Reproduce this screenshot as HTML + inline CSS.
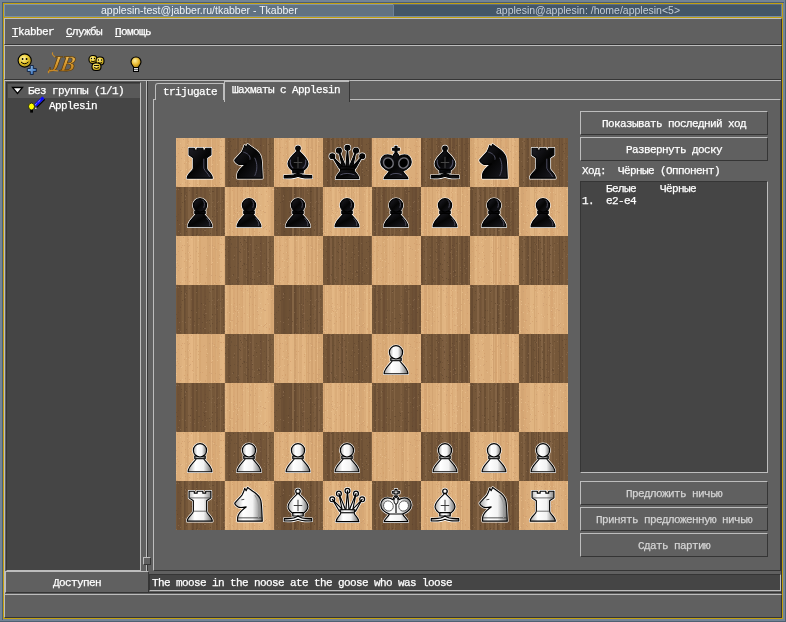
<!DOCTYPE html><html><head><meta charset="utf-8"><style>
html,body{margin:0;padding:0;width:786px;height:622px;overflow:hidden;background:#738496}
body{position:relative;font-family:"Liberation Mono",monospace}
.m{will-change:transform;-webkit-text-stroke:0.25px currentColor;position:absolute;white-space:pre;font-family:"Liberation Mono",monospace;font-size:11px;letter-spacing:-0.6px;line-height:12px;color:#fff}
.mn{position:absolute;white-space:pre;font-family:"Liberation Sans",sans-serif;font-size:11px;letter-spacing:0px;line-height:12px;color:#fff}
.tt{will-change:transform;position:absolute;white-space:pre;font-family:"Liberation Sans",sans-serif;font-size:10.5px;letter-spacing:0px;line-height:12px}
u{text-decoration:underline}
</style></head><body><div style="position:absolute;left:0px;top:0px;width:786px;height:622px;background:#738496"></div>
<div style="position:absolute;left:785px;top:0px;width:1px;height:622px;background:#4f6172"></div>
<div style="position:absolute;left:0px;top:621px;width:786px;height:1px;background:#4f6172"></div>
<div style="position:absolute;left:2px;top:2px;width:782px;height:1px;background:#4d5f70"></div>
<div style="position:absolute;left:2px;top:2px;width:1px;height:618px;background:#4d5f70"></div>
<div style="position:absolute;left:3px;top:3px;width:778px;height:614px;border:1px solid #c2a010"></div>
<div style="position:absolute;left:4px;top:4px;width:389px;height:13px;background:#617282;border-top:1px solid #7f94a8;border-left:1px solid #7f94a8;box-sizing:border-box"></div>
<div style="position:absolute;left:393px;top:4px;width:389px;height:13px;background:#445667;border-top:1px solid #5d7084;border-left:1px solid #6e8296;border-right:1px solid #6e8296;box-sizing:border-box"></div>
<div style="position:absolute;left:4px;top:16px;width:777px;height:1px;background:#7a8ea2"></div>
<div style="position:absolute;left:3px;top:17px;width:780px;height:1px;background:#c2a010"></div>
<div class="tt" style="left:101px;top:4px;color:#eef2f6">applesin-test@jabber.ru/tkabber - Tkabber</div>
<div class="tt" style="left:496px;top:4px;color:#c3ccd6">applesin@applesin: /home/applesin&lt;5&gt;</div>
<div style="position:absolute;left:4px;top:18px;width:778px;height:600px;background:#606060"></div>
<div style="position:absolute;left:4px;top:18px;width:776px;height:25px;background:#606060;border-top:1px solid #bdbdbd;border-left:1px solid #bdbdbd;border-bottom:1px solid #353535;border-right:1px solid #353535;"></div>
<div class="m" style="left:12px;top:26px;"><u>T</u>kabber</div>
<div class="m" style="left:66px;top:26px;"><u>С</u>лужбы</div>
<div class="m" style="left:115px;top:26px;"><u>П</u>омощь</div>
<div style="position:absolute;left:4px;top:45px;width:776px;height:33px;background:#606060;border-top:1px solid #bdbdbd;border-left:1px solid #bdbdbd;border-bottom:1px solid #353535;border-right:1px solid #353535;"></div>
<div style="position:absolute;left:4px;top:80px;width:778px;height:1px;background:#bdbdbd"></div>
<div style="position:absolute;left:4px;top:80px;width:1px;height:514px;background:#bdbdbd"></div>
<div style="position:absolute;left:781px;top:80px;width:1px;height:514px;background:#353535"></div>
<div style="position:absolute;left:6px;top:82px;width:133px;height:487px;background:#454545;border-top:1px solid #353535;border-left:1px solid #353535;border-bottom:1px solid #bdbdbd;border-right:1px solid #bdbdbd;"></div>
<div style="position:absolute;left:8px;top:84px;width:132px;height:14px;background:#595959"></div>
<svg style="position:absolute;left:11px;top:86px" width="13" height="9"><path d="M1.5,1.5 H11.5 L6.5,7.5 Z" fill="#fff" stroke="#000" stroke-width="1.3"/></svg>
<div class="m" style="left:28px;top:85px;">Без группы (1/1)</div>
<div class="m" style="left:49px;top:100px;">Applesin</div>
<svg style="position:absolute;left:27px;top:95px" width="19" height="19">
<path d="M9.8,12.3 L17.8,4.3" stroke="#000" stroke-width="1.2"/>
<path d="M7,9.5 L15.3,1.5 L17.6,3.6 L9.4,11.6 Z" fill="#0a0aff"/>
<path d="M8,10.2 L14,4.4" stroke="#fff" stroke-width="0.9" stroke-dasharray="1,1"/>
<rect x="8.2" y="12.7" width="1.2" height="1.2" fill="#fff"/>
<ellipse cx="4.5" cy="11.5" rx="3" ry="3.4" fill="#ffff00" stroke="#111" stroke-width="0.8"/>
<rect x="3.2" y="15" width="2.8" height="2.6" fill="#000"/>
</svg>
<div style="position:absolute;left:146px;top:81px;width:1px;height:490px;background:#bdbdbd"></div>
<div style="position:absolute;left:147px;top:81px;width:1px;height:490px;background:#353535"></div>
<div style="position:absolute;left:143px;top:557px;width:6px;height:6px;background:#606060;border-top:1px solid #bdbdbd;border-left:1px solid #bdbdbd;border-bottom:1px solid #353535;border-right:1px solid #353535;"></div>
<div style="position:absolute;left:153px;top:99px;width:626px;height:470px;background:#606060;border-top:1px solid #bdbdbd;border-left:1px solid #bdbdbd;border-bottom:1px solid #353535;border-right:1px solid #353535;"></div>
<div style="position:absolute;left:155px;top:83px;width:67px;height:16px;background:#606060;border-top:1px solid #bdbdbd;border-left:1px solid #bdbdbd;border-right:1px solid #bdbdbd;border-top-left-radius:3px"></div>
<div class="m" style="left:163px;top:86px;">trijugate</div>
<div style="position:absolute;left:224px;top:80px;width:124px;height:20px;background:#606060;border-top:2px solid #bdbdbd;border-left:1px solid #bdbdbd;border-right:1px solid #353535;box-sizing:content-box"></div>
<div class="m" style="left:232px;top:84px;">Шахматы с Applesin</div>
<div style="position:absolute;left:580px;top:111px;width:186px;height:22px;background:#606060;border-top:1px solid #bdbdbd;border-left:1px solid #bdbdbd;border-bottom:1px solid #353535;border-right:1px solid #353535;"></div>
<div class="m" style="left:580px;top:118px;width:188px;text-align:center;color:#ffffff">Показывать последний ход</div>
<div style="position:absolute;left:580px;top:137px;width:186px;height:22px;background:#606060;border-top:1px solid #bdbdbd;border-left:1px solid #bdbdbd;border-bottom:1px solid #353535;border-right:1px solid #353535;"></div>
<div class="m" style="left:580px;top:144px;width:188px;text-align:center;color:#ffffff">Развернуть доску</div>
<div class="m" style="left:582px;top:165px;">Ход:&nbsp;&nbsp;Чёрные (Оппонент)</div>
<div style="position:absolute;left:580px;top:181px;width:186px;height:290px;background:#454545;border-top:1px solid #353535;border-left:1px solid #353535;border-bottom:1px solid #bdbdbd;border-right:1px solid #bdbdbd;"></div>
<div class="m" style="left:582px;top:183px;">&nbsp;&nbsp;&nbsp;&nbsp;Белые&nbsp;&nbsp;&nbsp;&nbsp;Чёрные</div>
<div class="m" style="left:582px;top:195px;">1.&nbsp;&nbsp;e2-e4</div>
<div style="position:absolute;left:580px;top:481px;width:186px;height:22px;background:#606060;border-top:1px solid #bdbdbd;border-left:1px solid #bdbdbd;border-bottom:1px solid #353535;border-right:1px solid #353535;"></div>
<div class="m" style="left:580px;top:488px;width:188px;text-align:center;color:#d4d4d4">Предложить ничью</div>
<div style="position:absolute;left:580px;top:507px;width:186px;height:22px;background:#606060;border-top:1px solid #bdbdbd;border-left:1px solid #bdbdbd;border-bottom:1px solid #353535;border-right:1px solid #353535;"></div>
<div class="m" style="left:580px;top:514px;width:188px;text-align:center;color:#d4d4d4">Принять предложенную ничью</div>
<div style="position:absolute;left:580px;top:533px;width:186px;height:22px;background:#606060;border-top:1px solid #bdbdbd;border-left:1px solid #bdbdbd;border-bottom:1px solid #353535;border-right:1px solid #353535;"></div>
<div class="m" style="left:580px;top:540px;width:188px;text-align:center;color:#d4d4d4">Сдать партию</div>
<div style="position:absolute;left:5px;top:571px;width:142px;height:20px;background:#606060;border-top:1px solid #bdbdbd;border-left:1px solid #bdbdbd;border-bottom:1px solid #353535;border-right:1px solid #353535;"></div>
<div class="m" style="left:5px;top:577px;width:144px;text-align:center">Доступен</div>
<div style="position:absolute;left:149px;top:574px;width:630px;height:15px;background:#454545;border-top:1px solid #353535;border-left:1px solid #353535;border-bottom:1px solid #bdbdbd;border-right:1px solid #bdbdbd;"></div>
<div class="m" style="left:152px;top:577px;">The moose in the noose ate the goose who was loose</div>
<div style="position:absolute;left:149px;top:592px;width:632px;height:1px;background:#353535"></div>
<div style="position:absolute;left:4px;top:594px;width:776px;height:22px;background:#606060;border-top:1px solid #bdbdbd;border-left:1px solid #bdbdbd;border-bottom:1px solid #353535;border-right:1px solid #353535;"></div>
<svg style="position:absolute;left:16px;top:52px" width="24" height="25">
<defs><radialGradient id="sg" cx="0.4" cy="0.35" r="0.7"><stop offset="0" stop-color="#fff3a0"/><stop offset="0.5" stop-color="#e8c830"/><stop offset="1" stop-color="#a88a10"/></radialGradient>
<linearGradient id="bg1" x1="0" y1="0" x2="1" y2="1"><stop offset="0" stop-color="#9cc8f0"/><stop offset="1" stop-color="#2a62b0"/></linearGradient></defs>
<circle cx="8.7" cy="8.5" r="6.6" fill="url(#sg)" stroke="#000" stroke-width="1.1"/>
<circle cx="6.6" cy="7" r="0.9" fill="#000"/><circle cx="10.6" cy="7" r="0.9" fill="#000"/>
<path d="M5,10 Q8.7,13.5 12.4,10" fill="none" stroke="#000" stroke-width="1"/>
<path d="M14.3,13 h3 v3 h3 v3 h-3 v3 h-3 v-3 h-3 v-3 h3 z" fill="url(#bg1)" stroke="#102040" stroke-width="0.9" transform="translate(0,0.5)"/>
</svg>
<svg style="position:absolute;left:46px;top:51px" width="34" height="25">
<defs><linearGradient id="jbg" x1="0" y1="0" x2="0" y2="1"><stop offset="0" stop-color="#f8d070"/><stop offset="0.5" stop-color="#d89a30"/><stop offset="1" stop-color="#a86a10"/></linearGradient></defs>
<text x="6" y="20" font-family="Liberation Serif" font-style="italic" font-weight="bold" font-size="22" fill="url(#jbg)" stroke="#5a3a08" stroke-width="0.7" letter-spacing="0" transform="skewX(-10)">JB</text>
<path d="M3,22 Q1,20 5,19.5 Q9,19 12,20" fill="none" stroke="#c88a28" stroke-width="1.3"/>
<path d="M9,6 Q5,3 7,1.5" fill="none" stroke="#c88a28" stroke-width="1.2"/>
</svg>
<svg style="position:absolute;left:87px;top:54px" width="20" height="18">
<defs><radialGradient id="sg2" cx="0.4" cy="0.35" r="0.7"><stop offset="0" stop-color="#fff3a0"/><stop offset="0.5" stop-color="#e8c830"/><stop offset="1" stop-color="#a88a10"/></radialGradient></defs>
<g stroke="#000" stroke-width="1.1" fill="url(#sg2)">
<rect x="2" y="1.5" width="8" height="8" rx="3.5"/><rect x="9" y="3" width="8" height="8" rx="3.5"/><rect x="5" y="9" width="9" height="7.5" rx="3.5"/></g>
<g fill="#000"><circle cx="4.5" cy="4.5" r="0.7"/><circle cx="7.5" cy="4.5" r="0.7"/><circle cx="11.5" cy="6" r="0.7"/><circle cx="14.5" cy="6" r="0.7"/></g>
<g stroke="#000" stroke-width="0.9" fill="none"><path d="M4,7 Q6,8.5 8,7"/><path d="M11,8.5 Q13,10 15,8.5"/><path d="M7,11.5 h5"/><path d="M7,13.5 Q9.5,15.5 12,13.5"/></g>
</svg>
<svg style="position:absolute;left:129px;top:55px" width="14" height="18">
<defs><radialGradient id="bulb" cx="0.4" cy="0.35" r="0.7"><stop offset="0" stop-color="#fff0a0"/><stop offset="0.55" stop-color="#e8b830"/><stop offset="1" stop-color="#a07810"/></radialGradient></defs>
<path d="M7,2 C3.5,2 2,4.5 2,7 C2,9.5 4,11 5,12.5 H9 C10,11 12,9.5 12,7 C12,4.5 10.5,2 7,2 Z" fill="url(#bulb)" stroke="#000" stroke-width="1.1"/>
<rect x="4.5" y="12.5" width="5" height="4" fill="#d8d8d8" stroke="#000" stroke-width="1"/>
<path d="M5,14.5 h4" stroke="#555" stroke-width="0.8"/>
</svg>
<svg style="position:absolute;left:176px;top:138px" width="392" height="392"><defs><linearGradient id="wg" x1="0" y1="0" x2="1" y2="0"><stop offset="0" stop-color="#a8a8a8"/><stop offset="0.3" stop-color="#ffffff"/><stop offset="0.65" stop-color="#f2f2f2"/><stop offset="1" stop-color="#707070"/></linearGradient><linearGradient id="bgr" x1="0" y1="0" x2="1" y2="1"><stop offset="0" stop-color="#202028"/><stop offset="0.5" stop-color="#050505"/><stop offset="1" stop-color="#1c1c24"/></linearGradient><pattern id="lt" patternUnits="userSpaceOnUse" width="392" height="49"><rect width="392" height="49" fill="#dbad7a"/><rect x="0" y="0" width="1" height="49" fill="#e8bd8a" opacity="0.31"/><rect x="4" y="0" width="2" height="49" fill="#e8bd8a" opacity="0.26"/><rect x="6" y="0" width="2" height="49" fill="#eec490" opacity="0.32"/><rect x="8" y="0" width="1" height="49" fill="#e8bd8a" opacity="0.46"/><rect x="11" y="0" width="1" height="49" fill="#c99866" opacity="0.29"/><rect x="13" y="0" width="2" height="49" fill="#eec490" opacity="0.41"/><rect x="15" y="0" width="2" height="49" fill="#eec490" opacity="0.49"/><rect x="18" y="0" width="1" height="49" fill="#eec490" opacity="0.27"/><rect x="21" y="0" width="2" height="49" fill="#eec490" opacity="0.37"/><rect x="23" y="0" width="2" height="49" fill="#d3a06c" opacity="0.40"/><rect x="31" y="0" width="2" height="49" fill="#c99866" opacity="0.34"/><rect x="33" y="0" width="2" height="49" fill="#c99866" opacity="0.32"/><rect x="35" y="0" width="1" height="49" fill="#eec490" opacity="0.43"/><rect x="36" y="0" width="1" height="49" fill="#c99866" opacity="0.31"/><rect x="37" y="0" width="2" height="49" fill="#d3a06c" opacity="0.35"/><rect x="39" y="0" width="1" height="49" fill="#c99866" opacity="0.23"/><rect x="41" y="0" width="2" height="49" fill="#d3a06c" opacity="0.25"/><rect x="44" y="0" width="2" height="49" fill="#e8bd8a" opacity="0.47"/><rect x="46" y="0" width="2" height="49" fill="#eec490" opacity="0.39"/><rect x="49" y="0" width="2" height="49" fill="#e8bd8a" opacity="0.48"/><rect x="53" y="0" width="2" height="49" fill="#c99866" opacity="0.44"/><rect x="55" y="0" width="2" height="49" fill="#e8bd8a" opacity="0.22"/><rect x="57" y="0" width="2" height="49" fill="#d3a06c" opacity="0.38"/><rect x="61" y="0" width="1" height="49" fill="#c99866" opacity="0.49"/><rect x="64" y="0" width="2" height="49" fill="#d3a06c" opacity="0.25"/><rect x="66" y="0" width="1" height="49" fill="#d3a06c" opacity="0.45"/><rect x="67" y="0" width="2" height="49" fill="#eec490" opacity="0.23"/><rect x="70" y="0" width="1" height="49" fill="#e8bd8a" opacity="0.40"/><rect x="71" y="0" width="2" height="49" fill="#e8bd8a" opacity="0.40"/><rect x="73" y="0" width="1" height="49" fill="#d3a06c" opacity="0.48"/><rect x="74" y="0" width="1" height="49" fill="#e8bd8a" opacity="0.22"/><rect x="76" y="0" width="2" height="49" fill="#c99866" opacity="0.21"/><rect x="78" y="0" width="1" height="49" fill="#e8bd8a" opacity="0.46"/><rect x="82" y="0" width="2" height="49" fill="#eec490" opacity="0.29"/><rect x="84" y="0" width="2" height="49" fill="#eec490" opacity="0.29"/><rect x="86" y="0" width="2" height="49" fill="#eec490" opacity="0.25"/><rect x="88" y="0" width="1" height="49" fill="#eec490" opacity="0.37"/><rect x="89" y="0" width="1" height="49" fill="#eec490" opacity="0.45"/><rect x="90" y="0" width="2" height="49" fill="#e8bd8a" opacity="0.46"/><rect x="92" y="0" width="2" height="49" fill="#e8bd8a" opacity="0.21"/><rect x="95" y="0" width="2" height="49" fill="#c99866" opacity="0.34"/><rect x="97" y="0" width="1" height="49" fill="#d3a06c" opacity="0.27"/><rect x="98" y="0" width="1" height="49" fill="#eec490" opacity="0.22"/><rect x="99" y="0" width="1" height="49" fill="#d3a06c" opacity="0.49"/><rect x="102" y="0" width="1" height="49" fill="#e8bd8a" opacity="0.24"/><rect x="103" y="0" width="1" height="49" fill="#d3a06c" opacity="0.48"/><rect x="105" y="0" width="1" height="49" fill="#eec490" opacity="0.21"/><rect x="106" y="0" width="2" height="49" fill="#eec490" opacity="0.22"/><rect x="111" y="0" width="1" height="49" fill="#c99866" opacity="0.22"/><rect x="113" y="0" width="1" height="49" fill="#eec490" opacity="0.29"/><rect x="114" y="0" width="2" height="49" fill="#eec490" opacity="0.39"/><rect x="116" y="0" width="2" height="49" fill="#e8bd8a" opacity="0.50"/><rect x="118" y="0" width="2" height="49" fill="#c99866" opacity="0.41"/><rect x="122" y="0" width="1" height="49" fill="#eec490" opacity="0.38"/><rect x="126" y="0" width="2" height="49" fill="#eec490" opacity="0.43"/><rect x="128" y="0" width="2" height="49" fill="#eec490" opacity="0.34"/><rect x="130" y="0" width="1" height="49" fill="#d3a06c" opacity="0.41"/><rect x="132" y="0" width="1" height="49" fill="#c99866" opacity="0.48"/><rect x="135" y="0" width="2" height="49" fill="#c99866" opacity="0.48"/><rect x="139" y="0" width="2" height="49" fill="#c99866" opacity="0.44"/><rect x="141" y="0" width="1" height="49" fill="#e8bd8a" opacity="0.43"/><rect x="142" y="0" width="1" height="49" fill="#c99866" opacity="0.40"/><rect x="143" y="0" width="2" height="49" fill="#c99866" opacity="0.30"/><rect x="145" y="0" width="1" height="49" fill="#c99866" opacity="0.40"/><rect x="146" y="0" width="2" height="49" fill="#c99866" opacity="0.21"/><rect x="148" y="0" width="1" height="49" fill="#c99866" opacity="0.48"/><rect x="149" y="0" width="1" height="49" fill="#e8bd8a" opacity="0.45"/><rect x="151" y="0" width="1" height="49" fill="#eec490" opacity="0.28"/><rect x="156" y="0" width="2" height="49" fill="#eec490" opacity="0.45"/><rect x="158" y="0" width="1" height="49" fill="#eec490" opacity="0.25"/><rect x="161" y="0" width="1" height="49" fill="#eec490" opacity="0.42"/><rect x="162" y="0" width="2" height="49" fill="#e8bd8a" opacity="0.24"/><rect x="164" y="0" width="1" height="49" fill="#d3a06c" opacity="0.48"/><rect x="167" y="0" width="2" height="49" fill="#d3a06c" opacity="0.47"/><rect x="169" y="0" width="2" height="49" fill="#eec490" opacity="0.44"/><rect x="171" y="0" width="1" height="49" fill="#d3a06c" opacity="0.27"/><rect x="174" y="0" width="1" height="49" fill="#eec490" opacity="0.41"/><rect x="175" y="0" width="1" height="49" fill="#c99866" opacity="0.34"/><rect x="179" y="0" width="1" height="49" fill="#e8bd8a" opacity="0.47"/><rect x="181" y="0" width="2" height="49" fill="#e8bd8a" opacity="0.43"/><rect x="183" y="0" width="1" height="49" fill="#c99866" opacity="0.47"/><rect x="184" y="0" width="2" height="49" fill="#c99866" opacity="0.29"/><rect x="186" y="0" width="2" height="49" fill="#c99866" opacity="0.24"/><rect x="190" y="0" width="2" height="49" fill="#eec490" opacity="0.37"/><rect x="192" y="0" width="2" height="49" fill="#d3a06c" opacity="0.30"/><rect x="194" y="0" width="2" height="49" fill="#e8bd8a" opacity="0.39"/><rect x="196" y="0" width="2" height="49" fill="#d3a06c" opacity="0.24"/><rect x="198" y="0" width="2" height="49" fill="#eec490" opacity="0.23"/><rect x="200" y="0" width="2" height="49" fill="#d3a06c" opacity="0.40"/><rect x="206" y="0" width="2" height="49" fill="#d3a06c" opacity="0.40"/><rect x="209" y="0" width="2" height="49" fill="#d3a06c" opacity="0.40"/><rect x="212" y="0" width="1" height="49" fill="#eec490" opacity="0.24"/><rect x="214" y="0" width="2" height="49" fill="#e8bd8a" opacity="0.34"/><rect x="218" y="0" width="1" height="49" fill="#e8bd8a" opacity="0.43"/><rect x="219" y="0" width="2" height="49" fill="#d3a06c" opacity="0.28"/><rect x="222" y="0" width="1" height="49" fill="#d3a06c" opacity="0.27"/><rect x="225" y="0" width="2" height="49" fill="#c99866" opacity="0.31"/><rect x="227" y="0" width="1" height="49" fill="#c99866" opacity="0.40"/><rect x="228" y="0" width="1" height="49" fill="#e8bd8a" opacity="0.37"/><rect x="231" y="0" width="1" height="49" fill="#e8bd8a" opacity="0.46"/><rect x="232" y="0" width="1" height="49" fill="#e8bd8a" opacity="0.37"/><rect x="239" y="0" width="2" height="49" fill="#d3a06c" opacity="0.39"/><rect x="243" y="0" width="2" height="49" fill="#e8bd8a" opacity="0.42"/><rect x="245" y="0" width="1" height="49" fill="#e8bd8a" opacity="0.35"/><rect x="246" y="0" width="2" height="49" fill="#e8bd8a" opacity="0.21"/><rect x="248" y="0" width="2" height="49" fill="#d3a06c" opacity="0.49"/><rect x="250" y="0" width="1" height="49" fill="#c99866" opacity="0.39"/><rect x="251" y="0" width="1" height="49" fill="#e8bd8a" opacity="0.35"/><rect x="252" y="0" width="2" height="49" fill="#d3a06c" opacity="0.30"/><rect x="256" y="0" width="1" height="49" fill="#c99866" opacity="0.41"/><rect x="260" y="0" width="1" height="49" fill="#e8bd8a" opacity="0.35"/><rect x="262" y="0" width="2" height="49" fill="#e8bd8a" opacity="0.41"/><rect x="264" y="0" width="2" height="49" fill="#c99866" opacity="0.36"/><rect x="266" y="0" width="2" height="49" fill="#eec490" opacity="0.29"/><rect x="268" y="0" width="2" height="49" fill="#eec490" opacity="0.33"/><rect x="272" y="0" width="2" height="49" fill="#d3a06c" opacity="0.33"/><rect x="274" y="0" width="2" height="49" fill="#e8bd8a" opacity="0.49"/><rect x="276" y="0" width="1" height="49" fill="#d3a06c" opacity="0.24"/><rect x="277" y="0" width="2" height="49" fill="#e8bd8a" opacity="0.26"/><rect x="279" y="0" width="1" height="49" fill="#e8bd8a" opacity="0.39"/><rect x="280" y="0" width="1" height="49" fill="#e8bd8a" opacity="0.33"/><rect x="281" y="0" width="1" height="49" fill="#c99866" opacity="0.32"/><rect x="282" y="0" width="2" height="49" fill="#c99866" opacity="0.27"/><rect x="284" y="0" width="1" height="49" fill="#c99866" opacity="0.47"/><rect x="285" y="0" width="1" height="49" fill="#eec490" opacity="0.34"/><rect x="286" y="0" width="1" height="49" fill="#c99866" opacity="0.30"/><rect x="287" y="0" width="1" height="49" fill="#d3a06c" opacity="0.28"/><rect x="290" y="0" width="2" height="49" fill="#d3a06c" opacity="0.21"/><rect x="294" y="0" width="2" height="49" fill="#c99866" opacity="0.40"/><rect x="296" y="0" width="1" height="49" fill="#c99866" opacity="0.23"/><rect x="297" y="0" width="1" height="49" fill="#c99866" opacity="0.34"/><rect x="299" y="0" width="2" height="49" fill="#eec490" opacity="0.30"/><rect x="303" y="0" width="1" height="49" fill="#eec490" opacity="0.23"/><rect x="304" y="0" width="2" height="49" fill="#eec490" opacity="0.23"/><rect x="306" y="0" width="2" height="49" fill="#eec490" opacity="0.25"/><rect x="314" y="0" width="2" height="49" fill="#eec490" opacity="0.30"/><rect x="316" y="0" width="1" height="49" fill="#eec490" opacity="0.48"/><rect x="317" y="0" width="1" height="49" fill="#c99866" opacity="0.45"/><rect x="319" y="0" width="1" height="49" fill="#c99866" opacity="0.46"/><rect x="320" y="0" width="1" height="49" fill="#d3a06c" opacity="0.50"/><rect x="321" y="0" width="1" height="49" fill="#eec490" opacity="0.44"/><rect x="322" y="0" width="1" height="49" fill="#d3a06c" opacity="0.23"/><rect x="324" y="0" width="1" height="49" fill="#c99866" opacity="0.49"/><rect x="325" y="0" width="1" height="49" fill="#c99866" opacity="0.23"/><rect x="329" y="0" width="2" height="49" fill="#d3a06c" opacity="0.44"/><rect x="331" y="0" width="1" height="49" fill="#c99866" opacity="0.21"/><rect x="332" y="0" width="1" height="49" fill="#c99866" opacity="0.26"/><rect x="333" y="0" width="2" height="49" fill="#eec490" opacity="0.32"/><rect x="336" y="0" width="2" height="49" fill="#eec490" opacity="0.43"/><rect x="342" y="0" width="1" height="49" fill="#c99866" opacity="0.34"/><rect x="343" y="0" width="1" height="49" fill="#e8bd8a" opacity="0.35"/><rect x="345" y="0" width="2" height="49" fill="#c99866" opacity="0.38"/><rect x="347" y="0" width="1" height="49" fill="#c99866" opacity="0.30"/><rect x="348" y="0" width="2" height="49" fill="#d3a06c" opacity="0.27"/><rect x="354" y="0" width="2" height="49" fill="#e8bd8a" opacity="0.47"/><rect x="356" y="0" width="2" height="49" fill="#eec490" opacity="0.34"/><rect x="358" y="0" width="1" height="49" fill="#c99866" opacity="0.26"/><rect x="359" y="0" width="1" height="49" fill="#e8bd8a" opacity="0.29"/><rect x="361" y="0" width="1" height="49" fill="#e8bd8a" opacity="0.28"/><rect x="362" y="0" width="2" height="49" fill="#eec490" opacity="0.42"/><rect x="364" y="0" width="2" height="49" fill="#eec490" opacity="0.29"/><rect x="366" y="0" width="2" height="49" fill="#e8bd8a" opacity="0.25"/><rect x="372" y="0" width="2" height="49" fill="#eec490" opacity="0.34"/><rect x="374" y="0" width="1" height="49" fill="#d3a06c" opacity="0.29"/><rect x="375" y="0" width="2" height="49" fill="#d3a06c" opacity="0.44"/><rect x="379" y="0" width="1" height="49" fill="#e8bd8a" opacity="0.36"/><rect x="381" y="0" width="1" height="49" fill="#eec490" opacity="0.31"/><rect x="384" y="0" width="1" height="49" fill="#e8bd8a" opacity="0.20"/><rect x="388" y="0" width="1" height="49" fill="#d3a06c" opacity="0.27"/><rect x="389" y="0" width="2" height="49" fill="#d3a06c" opacity="0.30"/><rect x="391" y="0" width="1" height="49" fill="#e8bd8a" opacity="0.47"/></pattern><pattern id="dk" patternUnits="userSpaceOnUse" width="392" height="49"><rect width="392" height="49" fill="#755739"/><rect x="1" y="0" width="2" height="49" fill="#664a32" opacity="0.52"/><rect x="3" y="0" width="2" height="49" fill="#5f442d" opacity="0.31"/><rect x="6" y="0" width="2" height="49" fill="#836343" opacity="0.45"/><rect x="8" y="0" width="1" height="49" fill="#5f442d" opacity="0.57"/><rect x="9" y="0" width="1" height="49" fill="#664a32" opacity="0.48"/><rect x="12" y="0" width="2" height="49" fill="#8a6a4a" opacity="0.53"/><rect x="14" y="0" width="1" height="49" fill="#836343" opacity="0.49"/><rect x="16" y="0" width="2" height="49" fill="#5f442d" opacity="0.50"/><rect x="20" y="0" width="2" height="49" fill="#5f442d" opacity="0.45"/><rect x="24" y="0" width="2" height="49" fill="#664a32" opacity="0.37"/><rect x="28" y="0" width="2" height="49" fill="#664a32" opacity="0.39"/><rect x="33" y="0" width="2" height="49" fill="#836343" opacity="0.40"/><rect x="35" y="0" width="1" height="49" fill="#8a6a4a" opacity="0.59"/><rect x="39" y="0" width="1" height="49" fill="#836343" opacity="0.48"/><rect x="40" y="0" width="2" height="49" fill="#5f442d" opacity="0.37"/><rect x="44" y="0" width="1" height="49" fill="#8a6a4a" opacity="0.58"/><rect x="47" y="0" width="1" height="49" fill="#5f442d" opacity="0.37"/><rect x="48" y="0" width="1" height="49" fill="#8a6a4a" opacity="0.65"/><rect x="49" y="0" width="1" height="49" fill="#8a6a4a" opacity="0.51"/><rect x="52" y="0" width="2" height="49" fill="#5f442d" opacity="0.41"/><rect x="54" y="0" width="1" height="49" fill="#664a32" opacity="0.35"/><rect x="60" y="0" width="1" height="49" fill="#836343" opacity="0.34"/><rect x="61" y="0" width="2" height="49" fill="#664a32" opacity="0.51"/><rect x="63" y="0" width="2" height="49" fill="#836343" opacity="0.52"/><rect x="65" y="0" width="2" height="49" fill="#836343" opacity="0.63"/><rect x="70" y="0" width="1" height="49" fill="#8a6a4a" opacity="0.43"/><rect x="71" y="0" width="1" height="49" fill="#5f442d" opacity="0.46"/><rect x="72" y="0" width="1" height="49" fill="#5f442d" opacity="0.36"/><rect x="74" y="0" width="2" height="49" fill="#664a32" opacity="0.34"/><rect x="76" y="0" width="2" height="49" fill="#8a6a4a" opacity="0.43"/><rect x="84" y="0" width="2" height="49" fill="#664a32" opacity="0.41"/><rect x="90" y="0" width="1" height="49" fill="#664a32" opacity="0.48"/><rect x="91" y="0" width="2" height="49" fill="#8a6a4a" opacity="0.69"/><rect x="95" y="0" width="1" height="49" fill="#836343" opacity="0.52"/><rect x="96" y="0" width="2" height="49" fill="#836343" opacity="0.45"/><rect x="98" y="0" width="1" height="49" fill="#8a6a4a" opacity="0.32"/><rect x="105" y="0" width="2" height="49" fill="#664a32" opacity="0.50"/><rect x="107" y="0" width="2" height="49" fill="#5f442d" opacity="0.53"/><rect x="109" y="0" width="1" height="49" fill="#5f442d" opacity="0.45"/><rect x="110" y="0" width="1" height="49" fill="#5f442d" opacity="0.38"/><rect x="111" y="0" width="2" height="49" fill="#5f442d" opacity="0.31"/><rect x="113" y="0" width="2" height="49" fill="#664a32" opacity="0.63"/><rect x="115" y="0" width="1" height="49" fill="#5f442d" opacity="0.50"/><rect x="116" y="0" width="2" height="49" fill="#8a6a4a" opacity="0.66"/><rect x="118" y="0" width="2" height="49" fill="#5f442d" opacity="0.63"/><rect x="120" y="0" width="1" height="49" fill="#664a32" opacity="0.45"/><rect x="123" y="0" width="1" height="49" fill="#8a6a4a" opacity="0.46"/><rect x="124" y="0" width="2" height="49" fill="#664a32" opacity="0.47"/><rect x="127" y="0" width="1" height="49" fill="#664a32" opacity="0.33"/><rect x="128" y="0" width="1" height="49" fill="#836343" opacity="0.55"/><rect x="134" y="0" width="1" height="49" fill="#5f442d" opacity="0.66"/><rect x="135" y="0" width="1" height="49" fill="#5f442d" opacity="0.37"/><rect x="138" y="0" width="2" height="49" fill="#836343" opacity="0.56"/><rect x="140" y="0" width="1" height="49" fill="#664a32" opacity="0.44"/><rect x="141" y="0" width="1" height="49" fill="#664a32" opacity="0.55"/><rect x="142" y="0" width="2" height="49" fill="#8a6a4a" opacity="0.48"/><rect x="146" y="0" width="1" height="49" fill="#8a6a4a" opacity="0.37"/><rect x="151" y="0" width="2" height="49" fill="#5f442d" opacity="0.43"/><rect x="153" y="0" width="1" height="49" fill="#5f442d" opacity="0.39"/><rect x="154" y="0" width="2" height="49" fill="#8a6a4a" opacity="0.41"/><rect x="156" y="0" width="2" height="49" fill="#664a32" opacity="0.59"/><rect x="158" y="0" width="1" height="49" fill="#836343" opacity="0.37"/><rect x="159" y="0" width="1" height="49" fill="#8a6a4a" opacity="0.39"/><rect x="163" y="0" width="2" height="49" fill="#836343" opacity="0.54"/><rect x="165" y="0" width="2" height="49" fill="#5f442d" opacity="0.33"/><rect x="167" y="0" width="2" height="49" fill="#8a6a4a" opacity="0.41"/><rect x="171" y="0" width="1" height="49" fill="#836343" opacity="0.44"/><rect x="177" y="0" width="1" height="49" fill="#5f442d" opacity="0.44"/><rect x="182" y="0" width="2" height="49" fill="#5f442d" opacity="0.53"/><rect x="185" y="0" width="2" height="49" fill="#664a32" opacity="0.52"/><rect x="193" y="0" width="2" height="49" fill="#664a32" opacity="0.53"/><rect x="195" y="0" width="1" height="49" fill="#8a6a4a" opacity="0.53"/><rect x="198" y="0" width="2" height="49" fill="#664a32" opacity="0.67"/><rect x="200" y="0" width="2" height="49" fill="#836343" opacity="0.49"/><rect x="202" y="0" width="2" height="49" fill="#664a32" opacity="0.34"/><rect x="205" y="0" width="1" height="49" fill="#8a6a4a" opacity="0.35"/><rect x="207" y="0" width="2" height="49" fill="#5f442d" opacity="0.49"/><rect x="209" y="0" width="2" height="49" fill="#664a32" opacity="0.35"/><rect x="211" y="0" width="1" height="49" fill="#836343" opacity="0.36"/><rect x="214" y="0" width="1" height="49" fill="#8a6a4a" opacity="0.57"/><rect x="218" y="0" width="1" height="49" fill="#8a6a4a" opacity="0.60"/><rect x="224" y="0" width="1" height="49" fill="#836343" opacity="0.41"/><rect x="225" y="0" width="1" height="49" fill="#836343" opacity="0.60"/><rect x="228" y="0" width="2" height="49" fill="#664a32" opacity="0.53"/><rect x="230" y="0" width="2" height="49" fill="#5f442d" opacity="0.37"/><rect x="232" y="0" width="1" height="49" fill="#8a6a4a" opacity="0.50"/><rect x="234" y="0" width="2" height="49" fill="#664a32" opacity="0.38"/><rect x="236" y="0" width="1" height="49" fill="#5f442d" opacity="0.49"/><rect x="237" y="0" width="2" height="49" fill="#664a32" opacity="0.57"/><rect x="239" y="0" width="1" height="49" fill="#5f442d" opacity="0.55"/><rect x="240" y="0" width="1" height="49" fill="#5f442d" opacity="0.55"/><rect x="243" y="0" width="2" height="49" fill="#5f442d" opacity="0.33"/><rect x="245" y="0" width="2" height="49" fill="#5f442d" opacity="0.43"/><rect x="249" y="0" width="2" height="49" fill="#8a6a4a" opacity="0.46"/><rect x="255" y="0" width="2" height="49" fill="#5f442d" opacity="0.44"/><rect x="257" y="0" width="1" height="49" fill="#836343" opacity="0.34"/><rect x="260" y="0" width="1" height="49" fill="#8a6a4a" opacity="0.42"/><rect x="261" y="0" width="1" height="49" fill="#664a32" opacity="0.39"/><rect x="262" y="0" width="2" height="49" fill="#664a32" opacity="0.56"/><rect x="266" y="0" width="1" height="49" fill="#836343" opacity="0.55"/><rect x="267" y="0" width="1" height="49" fill="#836343" opacity="0.50"/><rect x="268" y="0" width="1" height="49" fill="#8a6a4a" opacity="0.48"/><rect x="269" y="0" width="1" height="49" fill="#8a6a4a" opacity="0.39"/><rect x="270" y="0" width="2" height="49" fill="#836343" opacity="0.33"/><rect x="273" y="0" width="2" height="49" fill="#5f442d" opacity="0.49"/><rect x="275" y="0" width="1" height="49" fill="#836343" opacity="0.66"/><rect x="276" y="0" width="1" height="49" fill="#664a32" opacity="0.42"/><rect x="277" y="0" width="2" height="49" fill="#664a32" opacity="0.62"/><rect x="281" y="0" width="1" height="49" fill="#5f442d" opacity="0.35"/><rect x="282" y="0" width="1" height="49" fill="#8a6a4a" opacity="0.60"/><rect x="285" y="0" width="2" height="49" fill="#5f442d" opacity="0.50"/><rect x="289" y="0" width="1" height="49" fill="#664a32" opacity="0.52"/><rect x="290" y="0" width="2" height="49" fill="#664a32" opacity="0.54"/><rect x="292" y="0" width="1" height="49" fill="#836343" opacity="0.60"/><rect x="295" y="0" width="2" height="49" fill="#5f442d" opacity="0.56"/><rect x="301" y="0" width="2" height="49" fill="#8a6a4a" opacity="0.70"/><rect x="304" y="0" width="1" height="49" fill="#664a32" opacity="0.34"/><rect x="306" y="0" width="2" height="49" fill="#836343" opacity="0.53"/><rect x="308" y="0" width="2" height="49" fill="#5f442d" opacity="0.45"/><rect x="310" y="0" width="2" height="49" fill="#836343" opacity="0.41"/><rect x="312" y="0" width="1" height="49" fill="#8a6a4a" opacity="0.61"/><rect x="315" y="0" width="2" height="49" fill="#836343" opacity="0.50"/><rect x="319" y="0" width="2" height="49" fill="#8a6a4a" opacity="0.67"/><rect x="321" y="0" width="1" height="49" fill="#5f442d" opacity="0.69"/><rect x="322" y="0" width="1" height="49" fill="#5f442d" opacity="0.35"/><rect x="324" y="0" width="2" height="49" fill="#8a6a4a" opacity="0.66"/><rect x="328" y="0" width="1" height="49" fill="#836343" opacity="0.50"/><rect x="329" y="0" width="2" height="49" fill="#5f442d" opacity="0.40"/><rect x="331" y="0" width="1" height="49" fill="#664a32" opacity="0.43"/><rect x="332" y="0" width="2" height="49" fill="#5f442d" opacity="0.41"/><rect x="334" y="0" width="1" height="49" fill="#836343" opacity="0.40"/><rect x="336" y="0" width="2" height="49" fill="#5f442d" opacity="0.43"/><rect x="340" y="0" width="1" height="49" fill="#836343" opacity="0.30"/><rect x="347" y="0" width="2" height="49" fill="#8a6a4a" opacity="0.44"/><rect x="350" y="0" width="1" height="49" fill="#664a32" opacity="0.32"/><rect x="351" y="0" width="2" height="49" fill="#664a32" opacity="0.63"/><rect x="353" y="0" width="1" height="49" fill="#8a6a4a" opacity="0.42"/><rect x="354" y="0" width="1" height="49" fill="#836343" opacity="0.59"/><rect x="355" y="0" width="1" height="49" fill="#5f442d" opacity="0.54"/><rect x="356" y="0" width="1" height="49" fill="#664a32" opacity="0.44"/><rect x="357" y="0" width="1" height="49" fill="#5f442d" opacity="0.35"/><rect x="360" y="0" width="1" height="49" fill="#664a32" opacity="0.52"/><rect x="361" y="0" width="1" height="49" fill="#836343" opacity="0.70"/><rect x="362" y="0" width="1" height="49" fill="#5f442d" opacity="0.61"/><rect x="365" y="0" width="2" height="49" fill="#8a6a4a" opacity="0.64"/><rect x="367" y="0" width="2" height="49" fill="#664a32" opacity="0.59"/><rect x="369" y="0" width="2" height="49" fill="#836343" opacity="0.51"/><rect x="371" y="0" width="1" height="49" fill="#664a32" opacity="0.37"/><rect x="373" y="0" width="1" height="49" fill="#664a32" opacity="0.43"/><rect x="374" y="0" width="2" height="49" fill="#8a6a4a" opacity="0.64"/><rect x="378" y="0" width="1" height="49" fill="#836343" opacity="0.44"/><rect x="383" y="0" width="1" height="49" fill="#5f442d" opacity="0.57"/><rect x="385" y="0" width="2" height="49" fill="#664a32" opacity="0.31"/><rect x="387" y="0" width="1" height="49" fill="#836343" opacity="0.32"/><rect x="388" y="0" width="1" height="49" fill="#836343" opacity="0.60"/></pattern><pattern id="ltn" patternUnits="userSpaceOnUse" width="98" height="98"><rect x="89" y="68" width="1" height="1" fill="#d09a68"/><rect x="1" y="27" width="1" height="1" fill="#d09a68"/><rect x="55" y="16" width="1" height="1" fill="#d09a68"/><rect x="44" y="56" width="1" height="1" fill="#d09a68"/><rect x="66" y="52" width="1" height="1" fill="#d09a68"/><rect x="60" y="17" width="1" height="1" fill="#d09a68"/><rect x="93" y="38" width="1" height="1" fill="#d09a68"/><rect x="36" y="9" width="1" height="1" fill="#c99a70"/><rect x="97" y="21" width="1" height="1" fill="#d09a68"/><rect x="42" y="56" width="1" height="1" fill="#eac493"/><rect x="30" y="66" width="1" height="1" fill="#d09a68"/><rect x="68" y="40" width="1" height="1" fill="#eac493"/><rect x="43" y="44" width="1" height="1" fill="#c99a70"/><rect x="37" y="47" width="1" height="1" fill="#c99a70"/><rect x="23" y="49" width="1" height="1" fill="#d09a68"/><rect x="38" y="76" width="1" height="1" fill="#eac493"/><rect x="51" y="65" width="1" height="1" fill="#eac493"/><rect x="27" y="12" width="1" height="1" fill="#d09a68"/><rect x="44" y="0" width="1" height="1" fill="#d09a68"/><rect x="93" y="46" width="1" height="1" fill="#eac493"/><rect x="7" y="83" width="1" height="1" fill="#d09a68"/><rect x="58" y="67" width="1" height="1" fill="#d09a68"/><rect x="77" y="32" width="1" height="1" fill="#d09a68"/><rect x="63" y="68" width="1" height="1" fill="#d09a68"/><rect x="95" y="62" width="1" height="1" fill="#d09a68"/><rect x="24" y="38" width="1" height="1" fill="#c99a70"/><rect x="88" y="9" width="1" height="1" fill="#eac493"/><rect x="56" y="50" width="1" height="1" fill="#d09a68"/><rect x="21" y="25" width="1" height="1" fill="#eac493"/><rect x="91" y="17" width="1" height="1" fill="#d09a68"/><rect x="73" y="33" width="1" height="1" fill="#c99a70"/><rect x="22" y="25" width="1" height="1" fill="#d09a68"/><rect x="30" y="58" width="1" height="1" fill="#d09a68"/><rect x="72" y="15" width="1" height="1" fill="#eac493"/><rect x="47" y="84" width="1" height="1" fill="#c99a70"/><rect x="66" y="85" width="1" height="1" fill="#c99a70"/><rect x="0" y="41" width="1" height="1" fill="#eac493"/><rect x="38" y="62" width="1" height="1" fill="#d09a68"/><rect x="5" y="81" width="1" height="1" fill="#eac493"/><rect x="37" y="22" width="1" height="1" fill="#d09a68"/><rect x="58" y="74" width="1" height="1" fill="#d09a68"/><rect x="63" y="39" width="1" height="1" fill="#d09a68"/><rect x="60" y="43" width="1" height="1" fill="#c99a70"/><rect x="8" y="25" width="1" height="1" fill="#d09a68"/><rect x="4" y="46" width="1" height="1" fill="#d09a68"/><rect x="9" y="44" width="1" height="1" fill="#c99a70"/><rect x="22" y="4" width="1" height="1" fill="#eac493"/><rect x="20" y="41" width="1" height="1" fill="#c99a70"/><rect x="21" y="46" width="1" height="1" fill="#d09a68"/><rect x="30" y="60" width="1" height="1" fill="#d09a68"/><rect x="65" y="81" width="1" height="1" fill="#d09a68"/><rect x="7" y="1" width="1" height="1" fill="#d09a68"/><rect x="29" y="86" width="1" height="1" fill="#eac493"/><rect x="18" y="73" width="1" height="1" fill="#eac493"/><rect x="71" y="31" width="1" height="1" fill="#eac493"/><rect x="44" y="74" width="1" height="1" fill="#eac493"/><rect x="19" y="58" width="1" height="1" fill="#eac493"/><rect x="85" y="89" width="1" height="1" fill="#eac493"/><rect x="7" y="59" width="1" height="1" fill="#eac493"/><rect x="2" y="82" width="1" height="1" fill="#d09a68"/><rect x="79" y="10" width="1" height="1" fill="#eac493"/><rect x="53" y="39" width="1" height="1" fill="#eac493"/><rect x="15" y="1" width="1" height="1" fill="#c99a70"/><rect x="12" y="52" width="1" height="1" fill="#d09a68"/><rect x="5" y="50" width="1" height="1" fill="#d09a68"/><rect x="54" y="97" width="1" height="1" fill="#c99a70"/><rect x="87" y="9" width="1" height="1" fill="#eac493"/><rect x="5" y="33" width="1" height="1" fill="#eac493"/><rect x="23" y="54" width="1" height="1" fill="#d09a68"/><rect x="44" y="52" width="1" height="1" fill="#d09a68"/><rect x="2" y="29" width="1" height="1" fill="#d09a68"/><rect x="76" y="45" width="1" height="1" fill="#d09a68"/><rect x="29" y="95" width="1" height="1" fill="#eac493"/><rect x="47" y="88" width="1" height="1" fill="#eac493"/><rect x="36" y="78" width="1" height="1" fill="#c99a70"/><rect x="29" y="46" width="1" height="1" fill="#d09a68"/><rect x="0" y="31" width="1" height="1" fill="#d09a68"/><rect x="20" y="62" width="1" height="1" fill="#eac493"/><rect x="24" y="17" width="1" height="1" fill="#d09a68"/><rect x="60" y="97" width="1" height="1" fill="#d09a68"/><rect x="75" y="56" width="1" height="1" fill="#c99a70"/><rect x="96" y="51" width="1" height="1" fill="#eac493"/><rect x="48" y="97" width="1" height="1" fill="#d09a68"/><rect x="50" y="11" width="1" height="1" fill="#c99a70"/><rect x="48" y="83" width="1" height="1" fill="#c99a70"/><rect x="26" y="96" width="1" height="1" fill="#d09a68"/><rect x="73" y="46" width="1" height="1" fill="#eac493"/><rect x="33" y="38" width="1" height="1" fill="#d09a68"/><rect x="84" y="82" width="1" height="1" fill="#eac493"/><rect x="82" y="71" width="1" height="1" fill="#eac493"/><rect x="19" y="82" width="1" height="1" fill="#eac493"/><rect x="66" y="9" width="1" height="1" fill="#eac493"/><rect x="41" y="77" width="1" height="1" fill="#eac493"/><rect x="93" y="24" width="1" height="1" fill="#c99a70"/><rect x="93" y="88" width="1" height="1" fill="#eac493"/><rect x="83" y="27" width="1" height="1" fill="#d09a68"/><rect x="92" y="27" width="1" height="1" fill="#d09a68"/><rect x="29" y="47" width="1" height="1" fill="#d09a68"/><rect x="33" y="57" width="1" height="1" fill="#c99a70"/><rect x="83" y="96" width="1" height="1" fill="#c99a70"/><rect x="95" y="14" width="1" height="1" fill="#d09a68"/><rect x="73" y="2" width="1" height="1" fill="#d09a68"/><rect x="74" y="52" width="1" height="1" fill="#c99a70"/><rect x="79" y="69" width="1" height="1" fill="#d09a68"/><rect x="39" y="39" width="1" height="1" fill="#d09a68"/><rect x="45" y="16" width="1" height="1" fill="#d09a68"/><rect x="67" y="16" width="1" height="1" fill="#eac493"/><rect x="22" y="60" width="1" height="1" fill="#d09a68"/><rect x="49" y="33" width="1" height="1" fill="#d09a68"/><rect x="30" y="20" width="1" height="1" fill="#d09a68"/><rect x="75" y="97" width="1" height="1" fill="#eac493"/><rect x="10" y="24" width="1" height="1" fill="#eac493"/><rect x="1" y="72" width="1" height="1" fill="#d09a68"/><rect x="62" y="7" width="1" height="1" fill="#d09a68"/><rect x="53" y="55" width="1" height="1" fill="#c99a70"/><rect x="79" y="50" width="1" height="1" fill="#eac493"/><rect x="52" y="38" width="1" height="1" fill="#eac493"/><rect x="81" y="74" width="1" height="1" fill="#eac493"/><rect x="9" y="59" width="1" height="1" fill="#c99a70"/><rect x="9" y="87" width="1" height="1" fill="#eac493"/><rect x="56" y="93" width="1" height="1" fill="#c99a70"/><rect x="33" y="69" width="1" height="1" fill="#c99a70"/><rect x="30" y="75" width="1" height="1" fill="#d09a68"/><rect x="44" y="35" width="1" height="1" fill="#d09a68"/><rect x="31" y="74" width="1" height="1" fill="#d09a68"/><rect x="80" y="41" width="1" height="1" fill="#eac493"/><rect x="6" y="9" width="1" height="1" fill="#d09a68"/><rect x="0" y="18" width="1" height="1" fill="#c99a70"/><rect x="79" y="28" width="1" height="1" fill="#d09a68"/><rect x="13" y="25" width="1" height="1" fill="#eac493"/><rect x="21" y="68" width="1" height="1" fill="#c99a70"/><rect x="21" y="50" width="1" height="1" fill="#d09a68"/><rect x="58" y="2" width="1" height="1" fill="#c99a70"/><rect x="41" y="26" width="1" height="1" fill="#eac493"/><rect x="53" y="28" width="1" height="1" fill="#c99a70"/><rect x="5" y="11" width="1" height="1" fill="#d09a68"/><rect x="8" y="71" width="1" height="1" fill="#d09a68"/><rect x="38" y="86" width="1" height="1" fill="#c99a70"/><rect x="23" y="56" width="1" height="1" fill="#c99a70"/><rect x="11" y="88" width="1" height="1" fill="#eac493"/><rect x="9" y="62" width="1" height="1" fill="#d09a68"/><rect x="84" y="19" width="1" height="1" fill="#c99a70"/><rect x="30" y="28" width="1" height="1" fill="#d09a68"/><rect x="62" y="35" width="1" height="1" fill="#eac493"/><rect x="86" y="7" width="1" height="1" fill="#c99a70"/><rect x="79" y="38" width="1" height="1" fill="#d09a68"/><rect x="45" y="8" width="1" height="1" fill="#d09a68"/><rect x="22" y="20" width="1" height="1" fill="#d09a68"/><rect x="79" y="3" width="1" height="1" fill="#eac493"/><rect x="14" y="30" width="1" height="1" fill="#c99a70"/><rect x="22" y="17" width="1" height="1" fill="#d09a68"/><rect x="40" y="89" width="1" height="1" fill="#c99a70"/><rect x="71" y="54" width="1" height="1" fill="#c99a70"/><rect x="37" y="11" width="1" height="1" fill="#eac493"/><rect x="31" y="64" width="1" height="1" fill="#eac493"/><rect x="30" y="15" width="1" height="1" fill="#eac493"/><rect x="73" y="80" width="1" height="1" fill="#d09a68"/><rect x="77" y="20" width="1" height="1" fill="#c99a70"/><rect x="84" y="67" width="1" height="1" fill="#eac493"/><rect x="12" y="16" width="1" height="1" fill="#eac493"/><rect x="52" y="3" width="1" height="1" fill="#d09a68"/><rect x="49" y="14" width="1" height="1" fill="#c99a70"/><rect x="69" y="53" width="1" height="1" fill="#d09a68"/><rect x="21" y="11" width="1" height="1" fill="#c99a70"/><rect x="60" y="3" width="1" height="1" fill="#c99a70"/><rect x="30" y="41" width="1" height="1" fill="#d09a68"/><rect x="42" y="60" width="1" height="1" fill="#d09a68"/><rect x="58" y="37" width="1" height="1" fill="#c99a70"/><rect x="13" y="45" width="1" height="1" fill="#d09a68"/><rect x="73" y="7" width="1" height="1" fill="#c99a70"/><rect x="45" y="40" width="1" height="1" fill="#c99a70"/><rect x="8" y="22" width="1" height="1" fill="#eac493"/><rect x="15" y="3" width="1" height="1" fill="#eac493"/><rect x="87" y="90" width="1" height="1" fill="#d09a68"/><rect x="60" y="80" width="1" height="1" fill="#c99a70"/><rect x="53" y="91" width="1" height="1" fill="#eac493"/><rect x="6" y="32" width="1" height="1" fill="#eac493"/><rect x="19" y="70" width="1" height="1" fill="#eac493"/><rect x="26" y="83" width="1" height="1" fill="#d09a68"/><rect x="8" y="41" width="1" height="1" fill="#d09a68"/><rect x="38" y="69" width="1" height="1" fill="#d09a68"/><rect x="80" y="48" width="1" height="1" fill="#c99a70"/><rect x="49" y="32" width="1" height="1" fill="#c99a70"/><rect x="88" y="74" width="1" height="1" fill="#c99a70"/><rect x="62" y="85" width="1" height="1" fill="#d09a68"/><rect x="11" y="49" width="1" height="1" fill="#eac493"/><rect x="9" y="78" width="1" height="1" fill="#d09a68"/><rect x="67" y="70" width="1" height="1" fill="#eac493"/><rect x="87" y="31" width="1" height="1" fill="#c99a70"/><rect x="28" y="66" width="1" height="1" fill="#d09a68"/><rect x="74" y="50" width="1" height="1" fill="#eac493"/><rect x="84" y="81" width="1" height="1" fill="#eac493"/><rect x="88" y="18" width="1" height="1" fill="#c99a70"/><rect x="90" y="87" width="1" height="1" fill="#d09a68"/><rect x="84" y="72" width="1" height="1" fill="#c99a70"/><rect x="30" y="22" width="1" height="1" fill="#d09a68"/><rect x="58" y="47" width="1" height="1" fill="#d09a68"/><rect x="90" y="53" width="1" height="1" fill="#d09a68"/><rect x="50" y="95" width="1" height="1" fill="#eac493"/><rect x="65" y="71" width="1" height="1" fill="#eac493"/><rect x="51" y="68" width="1" height="1" fill="#eac493"/><rect x="38" y="10" width="1" height="1" fill="#d09a68"/><rect x="77" y="78" width="1" height="1" fill="#d09a68"/><rect x="40" y="13" width="1" height="1" fill="#c99a70"/><rect x="49" y="78" width="1" height="1" fill="#eac493"/><rect x="33" y="90" width="1" height="1" fill="#eac493"/><rect x="38" y="12" width="1" height="1" fill="#c99a70"/><rect x="58" y="72" width="1" height="1" fill="#d09a68"/><rect x="78" y="61" width="1" height="1" fill="#c99a70"/><rect x="13" y="74" width="1" height="1" fill="#eac493"/><rect x="91" y="63" width="1" height="1" fill="#c99a70"/><rect x="90" y="56" width="1" height="1" fill="#eac493"/><rect x="2" y="94" width="1" height="1" fill="#d09a68"/><rect x="36" y="86" width="1" height="1" fill="#eac493"/><rect x="9" y="17" width="1" height="1" fill="#d09a68"/><rect x="24" y="92" width="1" height="1" fill="#c99a70"/><rect x="5" y="61" width="1" height="1" fill="#eac493"/><rect x="66" y="49" width="1" height="1" fill="#d09a68"/><rect x="48" y="55" width="1" height="1" fill="#c99a70"/><rect x="19" y="96" width="1" height="1" fill="#c99a70"/><rect x="48" y="52" width="1" height="1" fill="#eac493"/><rect x="13" y="31" width="1" height="1" fill="#c99a70"/><rect x="89" y="87" width="1" height="1" fill="#c99a70"/><rect x="82" y="47" width="1" height="1" fill="#c99a70"/><rect x="86" y="72" width="1" height="1" fill="#eac493"/><rect x="83" y="94" width="1" height="1" fill="#d09a68"/><rect x="44" y="80" width="1" height="1" fill="#c99a70"/><rect x="39" y="46" width="1" height="1" fill="#d09a68"/><rect x="6" y="83" width="1" height="1" fill="#d09a68"/><rect x="35" y="62" width="1" height="1" fill="#eac493"/><rect x="96" y="0" width="1" height="1" fill="#c99a70"/><rect x="48" y="91" width="1" height="1" fill="#d09a68"/><rect x="4" y="32" width="1" height="1" fill="#c99a70"/><rect x="10" y="31" width="1" height="1" fill="#eac493"/><rect x="74" y="60" width="1" height="1" fill="#c99a70"/><rect x="61" y="80" width="1" height="1" fill="#eac493"/><rect x="0" y="48" width="1" height="1" fill="#c99a70"/><rect x="38" y="57" width="1" height="1" fill="#d09a68"/><rect x="17" y="85" width="1" height="1" fill="#eac493"/><rect x="31" y="19" width="1" height="1" fill="#eac493"/><rect x="96" y="64" width="1" height="1" fill="#c99a70"/><rect x="8" y="9" width="1" height="1" fill="#c99a70"/><rect x="31" y="2" width="1" height="1" fill="#c99a70"/><rect x="88" y="41" width="1" height="1" fill="#eac493"/><rect x="57" y="70" width="1" height="1" fill="#c99a70"/><rect x="52" y="28" width="1" height="1" fill="#c99a70"/><rect x="43" y="14" width="1" height="1" fill="#eac493"/><rect x="83" y="89" width="1" height="1" fill="#c99a70"/><rect x="48" y="22" width="1" height="1" fill="#eac493"/><rect x="21" y="45" width="1" height="1" fill="#eac493"/><rect x="71" y="42" width="1" height="1" fill="#c99a70"/><rect x="22" y="56" width="1" height="1" fill="#c99a70"/><rect x="43" y="22" width="1" height="1" fill="#eac493"/><rect x="28" y="11" width="1" height="1" fill="#c99a70"/><rect x="60" y="70" width="1" height="1" fill="#eac493"/><rect x="79" y="59" width="1" height="1" fill="#d09a68"/><rect x="37" y="64" width="1" height="1" fill="#c99a70"/><rect x="50" y="8" width="1" height="1" fill="#c99a70"/><rect x="13" y="9" width="1" height="1" fill="#d09a68"/><rect x="30" y="32" width="1" height="1" fill="#eac493"/><rect x="82" y="25" width="1" height="1" fill="#c99a70"/><rect x="21" y="80" width="1" height="1" fill="#d09a68"/><rect x="73" y="67" width="1" height="1" fill="#c99a70"/><rect x="89" y="19" width="1" height="1" fill="#c99a70"/><rect x="43" y="81" width="1" height="1" fill="#eac493"/><rect x="96" y="30" width="1" height="1" fill="#c99a70"/><rect x="85" y="22" width="1" height="1" fill="#eac493"/><rect x="91" y="1" width="1" height="1" fill="#c99a70"/><rect x="35" y="39" width="1" height="1" fill="#c99a70"/><rect x="47" y="58" width="1" height="1" fill="#eac493"/><rect x="42" y="68" width="1" height="1" fill="#eac493"/><rect x="43" y="73" width="1" height="1" fill="#eac493"/><rect x="72" y="12" width="1" height="1" fill="#eac493"/><rect x="90" y="91" width="1" height="1" fill="#c99a70"/><rect x="89" y="87" width="1" height="1" fill="#eac493"/><rect x="74" y="61" width="1" height="1" fill="#c99a70"/><rect x="72" y="57" width="1" height="1" fill="#eac493"/><rect x="91" y="25" width="1" height="1" fill="#d09a68"/><rect x="46" y="13" width="1" height="1" fill="#eac493"/><rect x="14" y="65" width="1" height="1" fill="#eac493"/><rect x="86" y="23" width="1" height="1" fill="#eac493"/><rect x="84" y="19" width="1" height="1" fill="#c99a70"/><rect x="42" y="7" width="1" height="1" fill="#d09a68"/><rect x="35" y="0" width="1" height="1" fill="#c99a70"/><rect x="38" y="47" width="1" height="1" fill="#eac493"/><rect x="22" y="77" width="1" height="1" fill="#eac493"/><rect x="86" y="16" width="1" height="1" fill="#c99a70"/><rect x="40" y="66" width="1" height="1" fill="#eac493"/><rect x="76" y="68" width="1" height="1" fill="#d09a68"/><rect x="27" y="89" width="1" height="1" fill="#eac493"/><rect x="41" y="54" width="1" height="1" fill="#d09a68"/><rect x="10" y="53" width="1" height="1" fill="#c99a70"/><rect x="73" y="15" width="1" height="1" fill="#eac493"/><rect x="72" y="13" width="1" height="1" fill="#c99a70"/><rect x="65" y="2" width="1" height="1" fill="#eac493"/><rect x="56" y="33" width="1" height="1" fill="#eac493"/><rect x="36" y="26" width="1" height="1" fill="#eac493"/><rect x="51" y="94" width="1" height="1" fill="#c99a70"/><rect x="2" y="15" width="1" height="1" fill="#d09a68"/><rect x="54" y="11" width="1" height="1" fill="#d09a68"/><rect x="18" y="92" width="1" height="1" fill="#d09a68"/><rect x="20" y="64" width="1" height="1" fill="#eac493"/><rect x="30" y="34" width="1" height="1" fill="#eac493"/><rect x="79" y="54" width="1" height="1" fill="#d09a68"/><rect x="7" y="50" width="1" height="1" fill="#c99a70"/><rect x="1" y="48" width="1" height="1" fill="#d09a68"/><rect x="71" y="35" width="1" height="1" fill="#eac493"/><rect x="84" y="32" width="1" height="1" fill="#c99a70"/><rect x="45" y="2" width="1" height="1" fill="#c99a70"/><rect x="94" y="10" width="1" height="1" fill="#c99a70"/><rect x="16" y="27" width="1" height="1" fill="#d09a68"/><rect x="9" y="53" width="1" height="1" fill="#c99a70"/><rect x="56" y="52" width="1" height="1" fill="#d09a68"/><rect x="66" y="60" width="1" height="1" fill="#c99a70"/><rect x="11" y="41" width="1" height="1" fill="#d09a68"/><rect x="81" y="33" width="1" height="1" fill="#d09a68"/><rect x="44" y="3" width="1" height="1" fill="#c99a70"/><rect x="74" y="30" width="1" height="1" fill="#d09a68"/><rect x="95" y="77" width="1" height="1" fill="#d09a68"/><rect x="57" y="77" width="1" height="1" fill="#eac493"/><rect x="82" y="78" width="1" height="1" fill="#d09a68"/><rect x="87" y="97" width="1" height="1" fill="#c99a70"/><rect x="95" y="63" width="1" height="1" fill="#eac493"/><rect x="87" y="43" width="1" height="1" fill="#c99a70"/><rect x="43" y="96" width="1" height="1" fill="#c99a70"/><rect x="44" y="3" width="1" height="1" fill="#eac493"/><rect x="55" y="68" width="1" height="1" fill="#eac493"/><rect x="40" y="47" width="1" height="1" fill="#d09a68"/><rect x="12" y="3" width="1" height="1" fill="#d09a68"/><rect x="70" y="32" width="1" height="1" fill="#c99a70"/><rect x="97" y="67" width="1" height="1" fill="#c99a70"/><rect x="37" y="56" width="1" height="1" fill="#eac493"/><rect x="57" y="62" width="1" height="1" fill="#c99a70"/><rect x="65" y="35" width="1" height="1" fill="#eac493"/><rect x="6" y="45" width="1" height="1" fill="#eac493"/><rect x="35" y="28" width="1" height="1" fill="#d09a68"/><rect x="43" y="19" width="1" height="1" fill="#c99a70"/><rect x="60" y="26" width="1" height="1" fill="#d09a68"/><rect x="47" y="8" width="1" height="1" fill="#d09a68"/><rect x="1" y="2" width="1" height="1" fill="#d09a68"/><rect x="62" y="76" width="1" height="1" fill="#eac493"/><rect x="36" y="84" width="1" height="1" fill="#d09a68"/><rect x="92" y="50" width="1" height="1" fill="#d09a68"/><rect x="77" y="48" width="1" height="1" fill="#eac493"/><rect x="47" y="58" width="1" height="1" fill="#d09a68"/><rect x="81" y="75" width="1" height="1" fill="#c99a70"/><rect x="65" y="54" width="1" height="1" fill="#d09a68"/><rect x="12" y="23" width="1" height="1" fill="#d09a68"/><rect x="31" y="19" width="1" height="1" fill="#eac493"/><rect x="44" y="8" width="1" height="1" fill="#c99a70"/><rect x="36" y="64" width="1" height="1" fill="#d09a68"/><rect x="97" y="51" width="1" height="1" fill="#eac493"/><rect x="44" y="41" width="1" height="1" fill="#d09a68"/><rect x="27" y="0" width="1" height="1" fill="#d09a68"/><rect x="2" y="76" width="1" height="1" fill="#eac493"/><rect x="11" y="40" width="1" height="1" fill="#d09a68"/><rect x="83" y="39" width="1" height="1" fill="#eac493"/><rect x="13" y="16" width="1" height="1" fill="#d09a68"/><rect x="89" y="15" width="1" height="1" fill="#eac493"/><rect x="14" y="22" width="1" height="1" fill="#c99a70"/><rect x="78" y="93" width="1" height="1" fill="#d09a68"/><rect x="74" y="24" width="1" height="1" fill="#d09a68"/><rect x="24" y="86" width="1" height="1" fill="#eac493"/><rect x="83" y="62" width="1" height="1" fill="#eac493"/><rect x="26" y="85" width="1" height="1" fill="#d09a68"/><rect x="40" y="75" width="1" height="1" fill="#eac493"/><rect x="45" y="81" width="1" height="1" fill="#eac493"/><rect x="87" y="73" width="1" height="1" fill="#d09a68"/><rect x="82" y="89" width="1" height="1" fill="#d09a68"/><rect x="24" y="47" width="1" height="1" fill="#eac493"/><rect x="16" y="36" width="1" height="1" fill="#d09a68"/><rect x="35" y="93" width="1" height="1" fill="#c99a70"/><rect x="53" y="76" width="1" height="1" fill="#eac493"/><rect x="59" y="89" width="1" height="1" fill="#eac493"/><rect x="12" y="10" width="1" height="1" fill="#c99a70"/><rect x="54" y="85" width="1" height="1" fill="#eac493"/><rect x="57" y="94" width="1" height="1" fill="#d09a68"/><rect x="67" y="56" width="1" height="1" fill="#eac493"/><rect x="37" y="59" width="1" height="1" fill="#eac493"/><rect x="4" y="95" width="1" height="1" fill="#eac493"/><rect x="20" y="15" width="1" height="1" fill="#c99a70"/><rect x="11" y="6" width="1" height="1" fill="#eac493"/><rect x="47" y="57" width="1" height="1" fill="#d09a68"/><rect x="59" y="75" width="1" height="1" fill="#d09a68"/><rect x="93" y="40" width="1" height="1" fill="#c99a70"/><rect x="0" y="26" width="1" height="1" fill="#eac493"/><rect x="74" y="80" width="1" height="1" fill="#eac493"/><rect x="38" y="95" width="1" height="1" fill="#d09a68"/><rect x="48" y="29" width="1" height="1" fill="#d09a68"/><rect x="41" y="51" width="1" height="1" fill="#eac493"/><rect x="25" y="81" width="1" height="1" fill="#eac493"/><rect x="87" y="30" width="1" height="1" fill="#c99a70"/><rect x="64" y="27" width="1" height="1" fill="#c99a70"/><rect x="8" y="91" width="1" height="1" fill="#eac493"/><rect x="93" y="58" width="1" height="1" fill="#eac493"/><rect x="84" y="17" width="1" height="1" fill="#d09a68"/><rect x="60" y="15" width="1" height="1" fill="#eac493"/><rect x="83" y="48" width="1" height="1" fill="#d09a68"/><rect x="59" y="37" width="1" height="1" fill="#c99a70"/><rect x="5" y="62" width="1" height="1" fill="#c99a70"/><rect x="33" y="9" width="1" height="1" fill="#c99a70"/><rect x="95" y="48" width="1" height="1" fill="#c99a70"/><rect x="95" y="56" width="1" height="1" fill="#c99a70"/><rect x="49" y="85" width="1" height="1" fill="#d09a68"/><rect x="6" y="14" width="1" height="1" fill="#d09a68"/><rect x="63" y="97" width="1" height="1" fill="#eac493"/><rect x="80" y="54" width="1" height="1" fill="#eac493"/><rect x="4" y="76" width="1" height="1" fill="#eac493"/><rect x="15" y="1" width="1" height="1" fill="#d09a68"/><rect x="34" y="80" width="1" height="1" fill="#d09a68"/><rect x="45" y="35" width="1" height="1" fill="#c99a70"/><rect x="87" y="12" width="1" height="1" fill="#d09a68"/><rect x="45" y="66" width="1" height="1" fill="#d09a68"/><rect x="75" y="9" width="1" height="1" fill="#eac493"/><rect x="32" y="70" width="1" height="1" fill="#c99a70"/><rect x="48" y="68" width="1" height="1" fill="#d09a68"/><rect x="56" y="84" width="1" height="1" fill="#c99a70"/><rect x="0" y="39" width="1" height="1" fill="#eac493"/><rect x="42" y="80" width="1" height="1" fill="#eac493"/><rect x="51" y="76" width="1" height="1" fill="#d09a68"/><rect x="17" y="38" width="1" height="1" fill="#eac493"/><rect x="35" y="78" width="1" height="1" fill="#c99a70"/><rect x="92" y="67" width="1" height="1" fill="#eac493"/><rect x="14" y="19" width="1" height="1" fill="#d09a68"/><rect x="45" y="72" width="1" height="1" fill="#c99a70"/><rect x="47" y="75" width="1" height="1" fill="#c99a70"/><rect x="72" y="81" width="1" height="1" fill="#eac493"/><rect x="26" y="38" width="1" height="1" fill="#d09a68"/><rect x="24" y="67" width="1" height="1" fill="#c99a70"/><rect x="2" y="10" width="1" height="1" fill="#d09a68"/><rect x="93" y="92" width="1" height="1" fill="#d09a68"/><rect x="65" y="50" width="1" height="1" fill="#d09a68"/><rect x="77" y="14" width="1" height="1" fill="#d09a68"/><rect x="7" y="88" width="1" height="1" fill="#c99a70"/><rect x="71" y="78" width="1" height="1" fill="#eac493"/><rect x="53" y="83" width="1" height="1" fill="#d09a68"/><rect x="44" y="46" width="1" height="1" fill="#c99a70"/><rect x="93" y="93" width="1" height="1" fill="#d09a68"/><rect x="51" y="9" width="1" height="1" fill="#d09a68"/><rect x="52" y="48" width="1" height="1" fill="#c99a70"/><rect x="96" y="27" width="1" height="1" fill="#eac493"/><rect x="60" y="25" width="1" height="1" fill="#c99a70"/><rect x="47" y="92" width="1" height="1" fill="#eac493"/><rect x="96" y="5" width="1" height="1" fill="#c99a70"/><rect x="43" y="40" width="1" height="1" fill="#c99a70"/><rect x="26" y="67" width="1" height="1" fill="#d09a68"/><rect x="59" y="24" width="1" height="1" fill="#eac493"/><rect x="74" y="41" width="1" height="1" fill="#d09a68"/><rect x="46" y="44" width="1" height="1" fill="#eac493"/><rect x="55" y="84" width="1" height="1" fill="#d09a68"/><rect x="85" y="76" width="1" height="1" fill="#eac493"/><rect x="23" y="48" width="1" height="1" fill="#eac493"/><rect x="96" y="95" width="1" height="1" fill="#d09a68"/><rect x="50" y="63" width="1" height="1" fill="#d09a68"/><rect x="79" y="37" width="1" height="1" fill="#c99a70"/><rect x="9" y="56" width="1" height="1" fill="#d09a68"/><rect x="69" y="12" width="1" height="1" fill="#c99a70"/><rect x="14" y="47" width="1" height="1" fill="#eac493"/><rect x="32" y="75" width="1" height="1" fill="#eac493"/><rect x="27" y="72" width="1" height="1" fill="#c99a70"/><rect x="61" y="74" width="1" height="1" fill="#eac493"/><rect x="69" y="95" width="1" height="1" fill="#d09a68"/><rect x="78" y="36" width="1" height="1" fill="#d09a68"/><rect x="63" y="73" width="1" height="1" fill="#c99a70"/><rect x="1" y="24" width="1" height="1" fill="#c99a70"/><rect x="83" y="54" width="1" height="1" fill="#eac493"/><rect x="80" y="82" width="1" height="1" fill="#eac493"/><rect x="89" y="74" width="1" height="1" fill="#c99a70"/><rect x="40" y="67" width="1" height="1" fill="#eac493"/><rect x="90" y="47" width="1" height="1" fill="#c99a70"/><rect x="21" y="33" width="1" height="1" fill="#c99a70"/><rect x="64" y="52" width="1" height="1" fill="#c99a70"/><rect x="9" y="77" width="1" height="1" fill="#c99a70"/><rect x="49" y="93" width="1" height="1" fill="#eac493"/><rect x="28" y="90" width="1" height="1" fill="#eac493"/><rect x="4" y="5" width="1" height="1" fill="#eac493"/><rect x="88" y="89" width="1" height="1" fill="#c99a70"/><rect x="89" y="88" width="1" height="1" fill="#d09a68"/><rect x="5" y="78" width="1" height="1" fill="#eac493"/><rect x="73" y="69" width="1" height="1" fill="#c99a70"/><rect x="9" y="36" width="1" height="1" fill="#d09a68"/><rect x="95" y="43" width="1" height="1" fill="#c99a70"/><rect x="60" y="87" width="1" height="1" fill="#c99a70"/><rect x="60" y="34" width="1" height="1" fill="#d09a68"/><rect x="96" y="9" width="1" height="1" fill="#c99a70"/><rect x="5" y="20" width="1" height="1" fill="#c99a70"/><rect x="68" y="77" width="1" height="1" fill="#d09a68"/><rect x="50" y="9" width="1" height="1" fill="#d09a68"/><rect x="82" y="13" width="1" height="1" fill="#c99a70"/><rect x="49" y="56" width="1" height="1" fill="#c99a70"/><rect x="35" y="60" width="1" height="1" fill="#c99a70"/><rect x="18" y="81" width="1" height="1" fill="#eac493"/><rect x="85" y="56" width="1" height="1" fill="#d09a68"/><rect x="41" y="58" width="1" height="1" fill="#d09a68"/><rect x="35" y="65" width="1" height="1" fill="#d09a68"/><rect x="47" y="52" width="1" height="1" fill="#d09a68"/><rect x="50" y="6" width="1" height="1" fill="#eac493"/><rect x="58" y="72" width="1" height="1" fill="#c99a70"/><rect x="71" y="47" width="1" height="1" fill="#c99a70"/><rect x="2" y="34" width="1" height="1" fill="#c99a70"/></pattern><pattern id="dkn" patternUnits="userSpaceOnUse" width="98" height="98"><rect x="23" y="11" width="1" height="1" fill="#8f7052"/><rect x="88" y="17" width="1" height="1" fill="#654b34"/><rect x="61" y="31" width="1" height="1" fill="#654b34"/><rect x="75" y="80" width="1" height="1" fill="#654b34"/><rect x="34" y="15" width="1" height="1" fill="#654b34"/><rect x="83" y="80" width="1" height="1" fill="#5a412b"/><rect x="36" y="78" width="1" height="1" fill="#5a412b"/><rect x="64" y="2" width="1" height="1" fill="#654b34"/><rect x="37" y="62" width="1" height="1" fill="#654b34"/><rect x="25" y="50" width="1" height="1" fill="#654b34"/><rect x="2" y="60" width="1" height="1" fill="#654b34"/><rect x="25" y="33" width="1" height="1" fill="#8f7052"/><rect x="9" y="57" width="1" height="1" fill="#8f7052"/><rect x="37" y="43" width="1" height="1" fill="#8f7052"/><rect x="67" y="27" width="1" height="1" fill="#654b34"/><rect x="47" y="14" width="1" height="1" fill="#5a412b"/><rect x="10" y="93" width="1" height="1" fill="#5a412b"/><rect x="65" y="8" width="1" height="1" fill="#5a412b"/><rect x="64" y="77" width="1" height="1" fill="#8f7052"/><rect x="12" y="27" width="1" height="1" fill="#5a412b"/><rect x="79" y="88" width="1" height="1" fill="#5a412b"/><rect x="72" y="21" width="1" height="1" fill="#8f7052"/><rect x="9" y="22" width="1" height="1" fill="#8f7052"/><rect x="38" y="19" width="1" height="1" fill="#8f7052"/><rect x="47" y="6" width="1" height="1" fill="#5a412b"/><rect x="24" y="92" width="1" height="1" fill="#654b34"/><rect x="45" y="72" width="1" height="1" fill="#8f7052"/><rect x="43" y="69" width="1" height="1" fill="#654b34"/><rect x="38" y="48" width="1" height="1" fill="#654b34"/><rect x="4" y="70" width="1" height="1" fill="#654b34"/><rect x="3" y="44" width="1" height="1" fill="#654b34"/><rect x="0" y="51" width="1" height="1" fill="#8f7052"/><rect x="10" y="22" width="1" height="1" fill="#5a412b"/><rect x="80" y="18" width="1" height="1" fill="#5a412b"/><rect x="46" y="34" width="1" height="1" fill="#5a412b"/><rect x="79" y="13" width="1" height="1" fill="#5a412b"/><rect x="58" y="30" width="1" height="1" fill="#654b34"/><rect x="49" y="13" width="1" height="1" fill="#5a412b"/><rect x="35" y="25" width="1" height="1" fill="#8f7052"/><rect x="76" y="90" width="1" height="1" fill="#654b34"/><rect x="38" y="72" width="1" height="1" fill="#654b34"/><rect x="94" y="5" width="1" height="1" fill="#654b34"/><rect x="31" y="34" width="1" height="1" fill="#654b34"/><rect x="83" y="91" width="1" height="1" fill="#654b34"/><rect x="58" y="59" width="1" height="1" fill="#5a412b"/><rect x="40" y="70" width="1" height="1" fill="#5a412b"/><rect x="72" y="24" width="1" height="1" fill="#654b34"/><rect x="51" y="23" width="1" height="1" fill="#8f7052"/><rect x="85" y="91" width="1" height="1" fill="#5a412b"/><rect x="64" y="68" width="1" height="1" fill="#654b34"/><rect x="57" y="39" width="1" height="1" fill="#654b34"/><rect x="20" y="96" width="1" height="1" fill="#5a412b"/><rect x="29" y="60" width="1" height="1" fill="#654b34"/><rect x="25" y="5" width="1" height="1" fill="#654b34"/><rect x="23" y="29" width="1" height="1" fill="#8f7052"/><rect x="35" y="42" width="1" height="1" fill="#8f7052"/><rect x="37" y="29" width="1" height="1" fill="#5a412b"/><rect x="36" y="25" width="1" height="1" fill="#8f7052"/><rect x="88" y="68" width="1" height="1" fill="#8f7052"/><rect x="65" y="96" width="1" height="1" fill="#654b34"/><rect x="54" y="48" width="1" height="1" fill="#654b34"/><rect x="87" y="40" width="1" height="1" fill="#654b34"/><rect x="29" y="92" width="1" height="1" fill="#8f7052"/><rect x="51" y="82" width="1" height="1" fill="#5a412b"/><rect x="45" y="97" width="1" height="1" fill="#654b34"/><rect x="84" y="19" width="1" height="1" fill="#8f7052"/><rect x="6" y="85" width="1" height="1" fill="#8f7052"/><rect x="8" y="32" width="1" height="1" fill="#8f7052"/><rect x="14" y="14" width="1" height="1" fill="#654b34"/><rect x="27" y="18" width="1" height="1" fill="#654b34"/><rect x="78" y="43" width="1" height="1" fill="#5a412b"/><rect x="27" y="92" width="1" height="1" fill="#5a412b"/><rect x="81" y="35" width="1" height="1" fill="#8f7052"/><rect x="75" y="26" width="1" height="1" fill="#5a412b"/><rect x="49" y="19" width="1" height="1" fill="#5a412b"/><rect x="83" y="39" width="1" height="1" fill="#8f7052"/><rect x="43" y="22" width="1" height="1" fill="#654b34"/><rect x="56" y="47" width="1" height="1" fill="#654b34"/><rect x="33" y="87" width="1" height="1" fill="#654b34"/><rect x="28" y="81" width="1" height="1" fill="#5a412b"/><rect x="33" y="15" width="1" height="1" fill="#5a412b"/><rect x="63" y="45" width="1" height="1" fill="#654b34"/><rect x="72" y="85" width="1" height="1" fill="#654b34"/><rect x="82" y="47" width="1" height="1" fill="#654b34"/><rect x="96" y="55" width="1" height="1" fill="#8f7052"/><rect x="83" y="95" width="1" height="1" fill="#8f7052"/><rect x="85" y="46" width="1" height="1" fill="#8f7052"/><rect x="21" y="4" width="1" height="1" fill="#8f7052"/><rect x="60" y="91" width="1" height="1" fill="#8f7052"/><rect x="49" y="69" width="1" height="1" fill="#654b34"/><rect x="9" y="21" width="1" height="1" fill="#654b34"/><rect x="57" y="94" width="1" height="1" fill="#654b34"/><rect x="70" y="6" width="1" height="1" fill="#5a412b"/><rect x="21" y="97" width="1" height="1" fill="#8f7052"/><rect x="28" y="18" width="1" height="1" fill="#8f7052"/><rect x="97" y="18" width="1" height="1" fill="#8f7052"/><rect x="23" y="96" width="1" height="1" fill="#654b34"/><rect x="36" y="80" width="1" height="1" fill="#8f7052"/><rect x="45" y="8" width="1" height="1" fill="#8f7052"/><rect x="21" y="54" width="1" height="1" fill="#654b34"/><rect x="40" y="91" width="1" height="1" fill="#654b34"/><rect x="72" y="35" width="1" height="1" fill="#5a412b"/><rect x="60" y="53" width="1" height="1" fill="#654b34"/><rect x="75" y="58" width="1" height="1" fill="#8f7052"/><rect x="93" y="13" width="1" height="1" fill="#5a412b"/><rect x="4" y="95" width="1" height="1" fill="#8f7052"/><rect x="20" y="76" width="1" height="1" fill="#8f7052"/><rect x="81" y="51" width="1" height="1" fill="#8f7052"/><rect x="15" y="28" width="1" height="1" fill="#5a412b"/><rect x="68" y="90" width="1" height="1" fill="#5a412b"/><rect x="76" y="43" width="1" height="1" fill="#5a412b"/><rect x="82" y="50" width="1" height="1" fill="#8f7052"/><rect x="92" y="32" width="1" height="1" fill="#5a412b"/><rect x="97" y="95" width="1" height="1" fill="#654b34"/><rect x="24" y="5" width="1" height="1" fill="#654b34"/><rect x="78" y="37" width="1" height="1" fill="#8f7052"/><rect x="68" y="13" width="1" height="1" fill="#8f7052"/><rect x="70" y="33" width="1" height="1" fill="#5a412b"/><rect x="68" y="28" width="1" height="1" fill="#5a412b"/><rect x="10" y="54" width="1" height="1" fill="#654b34"/><rect x="4" y="74" width="1" height="1" fill="#654b34"/><rect x="93" y="37" width="1" height="1" fill="#8f7052"/><rect x="83" y="36" width="1" height="1" fill="#5a412b"/><rect x="84" y="40" width="1" height="1" fill="#654b34"/><rect x="2" y="28" width="1" height="1" fill="#5a412b"/><rect x="31" y="63" width="1" height="1" fill="#654b34"/><rect x="55" y="7" width="1" height="1" fill="#654b34"/><rect x="84" y="19" width="1" height="1" fill="#8f7052"/><rect x="74" y="88" width="1" height="1" fill="#654b34"/><rect x="58" y="11" width="1" height="1" fill="#654b34"/><rect x="55" y="88" width="1" height="1" fill="#5a412b"/><rect x="58" y="81" width="1" height="1" fill="#654b34"/><rect x="31" y="29" width="1" height="1" fill="#8f7052"/><rect x="88" y="85" width="1" height="1" fill="#5a412b"/><rect x="71" y="12" width="1" height="1" fill="#5a412b"/><rect x="21" y="45" width="1" height="1" fill="#5a412b"/><rect x="0" y="40" width="1" height="1" fill="#8f7052"/><rect x="12" y="22" width="1" height="1" fill="#5a412b"/><rect x="31" y="39" width="1" height="1" fill="#5a412b"/><rect x="48" y="36" width="1" height="1" fill="#654b34"/><rect x="64" y="25" width="1" height="1" fill="#5a412b"/><rect x="74" y="71" width="1" height="1" fill="#5a412b"/><rect x="89" y="92" width="1" height="1" fill="#5a412b"/><rect x="13" y="52" width="1" height="1" fill="#654b34"/><rect x="91" y="30" width="1" height="1" fill="#654b34"/><rect x="8" y="63" width="1" height="1" fill="#5a412b"/><rect x="92" y="29" width="1" height="1" fill="#8f7052"/><rect x="16" y="97" width="1" height="1" fill="#5a412b"/><rect x="68" y="38" width="1" height="1" fill="#8f7052"/><rect x="5" y="3" width="1" height="1" fill="#654b34"/><rect x="3" y="5" width="1" height="1" fill="#654b34"/><rect x="88" y="31" width="1" height="1" fill="#8f7052"/><rect x="3" y="86" width="1" height="1" fill="#8f7052"/><rect x="0" y="78" width="1" height="1" fill="#654b34"/><rect x="15" y="63" width="1" height="1" fill="#8f7052"/><rect x="77" y="76" width="1" height="1" fill="#5a412b"/><rect x="31" y="84" width="1" height="1" fill="#654b34"/><rect x="51" y="85" width="1" height="1" fill="#5a412b"/><rect x="22" y="88" width="1" height="1" fill="#8f7052"/><rect x="82" y="11" width="1" height="1" fill="#8f7052"/><rect x="64" y="6" width="1" height="1" fill="#5a412b"/><rect x="94" y="32" width="1" height="1" fill="#8f7052"/><rect x="30" y="86" width="1" height="1" fill="#8f7052"/><rect x="60" y="47" width="1" height="1" fill="#654b34"/><rect x="40" y="87" width="1" height="1" fill="#654b34"/><rect x="57" y="72" width="1" height="1" fill="#654b34"/><rect x="69" y="3" width="1" height="1" fill="#8f7052"/><rect x="60" y="50" width="1" height="1" fill="#654b34"/><rect x="57" y="64" width="1" height="1" fill="#654b34"/><rect x="72" y="63" width="1" height="1" fill="#8f7052"/><rect x="9" y="86" width="1" height="1" fill="#8f7052"/><rect x="78" y="16" width="1" height="1" fill="#8f7052"/><rect x="24" y="21" width="1" height="1" fill="#8f7052"/><rect x="90" y="34" width="1" height="1" fill="#654b34"/><rect x="33" y="56" width="1" height="1" fill="#654b34"/><rect x="46" y="63" width="1" height="1" fill="#8f7052"/><rect x="0" y="3" width="1" height="1" fill="#5a412b"/><rect x="24" y="47" width="1" height="1" fill="#654b34"/><rect x="90" y="77" width="1" height="1" fill="#8f7052"/><rect x="19" y="2" width="1" height="1" fill="#654b34"/><rect x="31" y="20" width="1" height="1" fill="#5a412b"/><rect x="81" y="97" width="1" height="1" fill="#5a412b"/><rect x="29" y="36" width="1" height="1" fill="#654b34"/><rect x="23" y="2" width="1" height="1" fill="#8f7052"/><rect x="86" y="66" width="1" height="1" fill="#5a412b"/><rect x="85" y="14" width="1" height="1" fill="#654b34"/><rect x="6" y="64" width="1" height="1" fill="#5a412b"/><rect x="76" y="30" width="1" height="1" fill="#5a412b"/><rect x="22" y="82" width="1" height="1" fill="#654b34"/><rect x="83" y="40" width="1" height="1" fill="#654b34"/><rect x="32" y="1" width="1" height="1" fill="#654b34"/><rect x="91" y="91" width="1" height="1" fill="#5a412b"/><rect x="15" y="39" width="1" height="1" fill="#5a412b"/><rect x="53" y="96" width="1" height="1" fill="#654b34"/><rect x="90" y="37" width="1" height="1" fill="#5a412b"/><rect x="33" y="65" width="1" height="1" fill="#654b34"/><rect x="59" y="91" width="1" height="1" fill="#8f7052"/><rect x="50" y="81" width="1" height="1" fill="#8f7052"/><rect x="14" y="81" width="1" height="1" fill="#5a412b"/><rect x="54" y="3" width="1" height="1" fill="#5a412b"/><rect x="9" y="16" width="1" height="1" fill="#8f7052"/><rect x="26" y="86" width="1" height="1" fill="#5a412b"/><rect x="64" y="13" width="1" height="1" fill="#654b34"/><rect x="56" y="60" width="1" height="1" fill="#5a412b"/><rect x="47" y="90" width="1" height="1" fill="#8f7052"/><rect x="5" y="55" width="1" height="1" fill="#5a412b"/><rect x="92" y="22" width="1" height="1" fill="#8f7052"/><rect x="4" y="22" width="1" height="1" fill="#8f7052"/><rect x="45" y="95" width="1" height="1" fill="#654b34"/><rect x="22" y="10" width="1" height="1" fill="#8f7052"/><rect x="51" y="10" width="1" height="1" fill="#8f7052"/><rect x="77" y="73" width="1" height="1" fill="#8f7052"/><rect x="27" y="68" width="1" height="1" fill="#8f7052"/><rect x="42" y="63" width="1" height="1" fill="#8f7052"/><rect x="54" y="11" width="1" height="1" fill="#654b34"/><rect x="0" y="23" width="1" height="1" fill="#8f7052"/><rect x="20" y="56" width="1" height="1" fill="#8f7052"/><rect x="14" y="83" width="1" height="1" fill="#8f7052"/><rect x="18" y="45" width="1" height="1" fill="#654b34"/><rect x="9" y="58" width="1" height="1" fill="#8f7052"/><rect x="57" y="38" width="1" height="1" fill="#5a412b"/><rect x="38" y="68" width="1" height="1" fill="#8f7052"/><rect x="95" y="86" width="1" height="1" fill="#8f7052"/><rect x="34" y="55" width="1" height="1" fill="#8f7052"/><rect x="10" y="57" width="1" height="1" fill="#5a412b"/><rect x="57" y="1" width="1" height="1" fill="#5a412b"/><rect x="53" y="44" width="1" height="1" fill="#5a412b"/><rect x="64" y="32" width="1" height="1" fill="#5a412b"/><rect x="34" y="95" width="1" height="1" fill="#5a412b"/><rect x="52" y="3" width="1" height="1" fill="#8f7052"/><rect x="97" y="58" width="1" height="1" fill="#8f7052"/><rect x="12" y="81" width="1" height="1" fill="#654b34"/><rect x="28" y="32" width="1" height="1" fill="#654b34"/><rect x="36" y="3" width="1" height="1" fill="#654b34"/><rect x="15" y="44" width="1" height="1" fill="#654b34"/><rect x="19" y="47" width="1" height="1" fill="#5a412b"/><rect x="36" y="87" width="1" height="1" fill="#5a412b"/><rect x="23" y="82" width="1" height="1" fill="#5a412b"/><rect x="3" y="95" width="1" height="1" fill="#654b34"/><rect x="48" y="88" width="1" height="1" fill="#654b34"/><rect x="5" y="68" width="1" height="1" fill="#654b34"/><rect x="10" y="42" width="1" height="1" fill="#654b34"/><rect x="81" y="83" width="1" height="1" fill="#5a412b"/><rect x="5" y="4" width="1" height="1" fill="#8f7052"/><rect x="34" y="90" width="1" height="1" fill="#654b34"/><rect x="84" y="61" width="1" height="1" fill="#8f7052"/><rect x="11" y="26" width="1" height="1" fill="#654b34"/><rect x="83" y="34" width="1" height="1" fill="#8f7052"/><rect x="57" y="23" width="1" height="1" fill="#8f7052"/><rect x="61" y="87" width="1" height="1" fill="#654b34"/><rect x="92" y="26" width="1" height="1" fill="#5a412b"/><rect x="50" y="58" width="1" height="1" fill="#654b34"/><rect x="66" y="10" width="1" height="1" fill="#654b34"/><rect x="88" y="34" width="1" height="1" fill="#8f7052"/><rect x="58" y="59" width="1" height="1" fill="#5a412b"/><rect x="17" y="96" width="1" height="1" fill="#654b34"/><rect x="71" y="52" width="1" height="1" fill="#8f7052"/><rect x="47" y="58" width="1" height="1" fill="#654b34"/><rect x="47" y="46" width="1" height="1" fill="#8f7052"/><rect x="76" y="29" width="1" height="1" fill="#8f7052"/><rect x="25" y="27" width="1" height="1" fill="#5a412b"/><rect x="84" y="60" width="1" height="1" fill="#5a412b"/><rect x="89" y="45" width="1" height="1" fill="#654b34"/><rect x="65" y="23" width="1" height="1" fill="#8f7052"/><rect x="6" y="30" width="1" height="1" fill="#5a412b"/><rect x="1" y="11" width="1" height="1" fill="#8f7052"/><rect x="44" y="65" width="1" height="1" fill="#654b34"/><rect x="45" y="76" width="1" height="1" fill="#5a412b"/><rect x="38" y="36" width="1" height="1" fill="#8f7052"/><rect x="48" y="95" width="1" height="1" fill="#5a412b"/><rect x="21" y="65" width="1" height="1" fill="#654b34"/><rect x="76" y="35" width="1" height="1" fill="#654b34"/><rect x="1" y="82" width="1" height="1" fill="#5a412b"/><rect x="55" y="79" width="1" height="1" fill="#8f7052"/><rect x="3" y="91" width="1" height="1" fill="#654b34"/><rect x="60" y="59" width="1" height="1" fill="#8f7052"/><rect x="8" y="50" width="1" height="1" fill="#654b34"/><rect x="55" y="71" width="1" height="1" fill="#654b34"/><rect x="77" y="21" width="1" height="1" fill="#5a412b"/><rect x="58" y="19" width="1" height="1" fill="#8f7052"/><rect x="68" y="62" width="1" height="1" fill="#8f7052"/><rect x="84" y="7" width="1" height="1" fill="#5a412b"/><rect x="70" y="41" width="1" height="1" fill="#5a412b"/><rect x="46" y="23" width="1" height="1" fill="#654b34"/><rect x="54" y="31" width="1" height="1" fill="#5a412b"/><rect x="72" y="76" width="1" height="1" fill="#8f7052"/><rect x="25" y="67" width="1" height="1" fill="#5a412b"/><rect x="33" y="52" width="1" height="1" fill="#8f7052"/><rect x="14" y="0" width="1" height="1" fill="#5a412b"/><rect x="2" y="93" width="1" height="1" fill="#8f7052"/><rect x="31" y="20" width="1" height="1" fill="#654b34"/><rect x="96" y="5" width="1" height="1" fill="#654b34"/><rect x="27" y="78" width="1" height="1" fill="#654b34"/><rect x="20" y="55" width="1" height="1" fill="#5a412b"/><rect x="55" y="70" width="1" height="1" fill="#8f7052"/><rect x="9" y="0" width="1" height="1" fill="#5a412b"/><rect x="28" y="92" width="1" height="1" fill="#8f7052"/><rect x="31" y="8" width="1" height="1" fill="#654b34"/><rect x="64" y="16" width="1" height="1" fill="#5a412b"/><rect x="54" y="66" width="1" height="1" fill="#5a412b"/><rect x="29" y="45" width="1" height="1" fill="#8f7052"/><rect x="7" y="0" width="1" height="1" fill="#5a412b"/><rect x="30" y="4" width="1" height="1" fill="#5a412b"/><rect x="63" y="71" width="1" height="1" fill="#654b34"/><rect x="19" y="35" width="1" height="1" fill="#5a412b"/><rect x="53" y="63" width="1" height="1" fill="#5a412b"/><rect x="45" y="10" width="1" height="1" fill="#654b34"/><rect x="60" y="11" width="1" height="1" fill="#654b34"/><rect x="66" y="74" width="1" height="1" fill="#5a412b"/><rect x="40" y="92" width="1" height="1" fill="#5a412b"/><rect x="41" y="86" width="1" height="1" fill="#654b34"/><rect x="14" y="88" width="1" height="1" fill="#8f7052"/><rect x="16" y="26" width="1" height="1" fill="#8f7052"/><rect x="38" y="26" width="1" height="1" fill="#654b34"/><rect x="53" y="42" width="1" height="1" fill="#8f7052"/><rect x="41" y="64" width="1" height="1" fill="#8f7052"/><rect x="77" y="88" width="1" height="1" fill="#5a412b"/><rect x="15" y="19" width="1" height="1" fill="#8f7052"/><rect x="89" y="91" width="1" height="1" fill="#5a412b"/><rect x="86" y="27" width="1" height="1" fill="#8f7052"/><rect x="84" y="82" width="1" height="1" fill="#5a412b"/><rect x="90" y="23" width="1" height="1" fill="#5a412b"/><rect x="5" y="30" width="1" height="1" fill="#654b34"/><rect x="34" y="89" width="1" height="1" fill="#654b34"/><rect x="15" y="74" width="1" height="1" fill="#5a412b"/><rect x="80" y="22" width="1" height="1" fill="#8f7052"/><rect x="53" y="85" width="1" height="1" fill="#5a412b"/><rect x="48" y="57" width="1" height="1" fill="#8f7052"/><rect x="41" y="83" width="1" height="1" fill="#654b34"/><rect x="37" y="9" width="1" height="1" fill="#8f7052"/><rect x="32" y="96" width="1" height="1" fill="#654b34"/><rect x="45" y="1" width="1" height="1" fill="#5a412b"/><rect x="55" y="8" width="1" height="1" fill="#654b34"/><rect x="79" y="64" width="1" height="1" fill="#5a412b"/><rect x="86" y="86" width="1" height="1" fill="#5a412b"/><rect x="32" y="49" width="1" height="1" fill="#8f7052"/><rect x="63" y="83" width="1" height="1" fill="#5a412b"/><rect x="80" y="9" width="1" height="1" fill="#5a412b"/><rect x="2" y="22" width="1" height="1" fill="#5a412b"/><rect x="72" y="85" width="1" height="1" fill="#8f7052"/><rect x="19" y="10" width="1" height="1" fill="#8f7052"/><rect x="74" y="8" width="1" height="1" fill="#8f7052"/><rect x="65" y="90" width="1" height="1" fill="#8f7052"/><rect x="72" y="56" width="1" height="1" fill="#8f7052"/><rect x="69" y="40" width="1" height="1" fill="#654b34"/><rect x="5" y="57" width="1" height="1" fill="#654b34"/><rect x="38" y="21" width="1" height="1" fill="#5a412b"/><rect x="68" y="4" width="1" height="1" fill="#5a412b"/><rect x="36" y="53" width="1" height="1" fill="#5a412b"/><rect x="23" y="46" width="1" height="1" fill="#654b34"/><rect x="97" y="43" width="1" height="1" fill="#8f7052"/><rect x="96" y="20" width="1" height="1" fill="#8f7052"/><rect x="70" y="54" width="1" height="1" fill="#8f7052"/><rect x="94" y="15" width="1" height="1" fill="#654b34"/><rect x="62" y="81" width="1" height="1" fill="#5a412b"/><rect x="43" y="85" width="1" height="1" fill="#654b34"/><rect x="75" y="0" width="1" height="1" fill="#8f7052"/><rect x="62" y="27" width="1" height="1" fill="#654b34"/><rect x="37" y="53" width="1" height="1" fill="#5a412b"/><rect x="58" y="21" width="1" height="1" fill="#5a412b"/><rect x="36" y="64" width="1" height="1" fill="#8f7052"/><rect x="16" y="90" width="1" height="1" fill="#654b34"/><rect x="84" y="15" width="1" height="1" fill="#8f7052"/><rect x="92" y="6" width="1" height="1" fill="#5a412b"/><rect x="52" y="15" width="1" height="1" fill="#8f7052"/><rect x="9" y="0" width="1" height="1" fill="#5a412b"/><rect x="41" y="24" width="1" height="1" fill="#5a412b"/><rect x="38" y="44" width="1" height="1" fill="#8f7052"/><rect x="54" y="53" width="1" height="1" fill="#654b34"/><rect x="12" y="14" width="1" height="1" fill="#5a412b"/><rect x="24" y="51" width="1" height="1" fill="#654b34"/><rect x="82" y="36" width="1" height="1" fill="#5a412b"/><rect x="86" y="55" width="1" height="1" fill="#8f7052"/><rect x="72" y="18" width="1" height="1" fill="#5a412b"/><rect x="31" y="42" width="1" height="1" fill="#5a412b"/><rect x="7" y="3" width="1" height="1" fill="#5a412b"/><rect x="1" y="20" width="1" height="1" fill="#8f7052"/><rect x="78" y="50" width="1" height="1" fill="#5a412b"/><rect x="41" y="73" width="1" height="1" fill="#8f7052"/><rect x="72" y="15" width="1" height="1" fill="#8f7052"/><rect x="35" y="23" width="1" height="1" fill="#5a412b"/><rect x="61" y="51" width="1" height="1" fill="#654b34"/><rect x="48" y="90" width="1" height="1" fill="#8f7052"/><rect x="66" y="8" width="1" height="1" fill="#8f7052"/><rect x="51" y="41" width="1" height="1" fill="#654b34"/><rect x="9" y="16" width="1" height="1" fill="#8f7052"/><rect x="87" y="7" width="1" height="1" fill="#8f7052"/><rect x="2" y="51" width="1" height="1" fill="#8f7052"/><rect x="47" y="71" width="1" height="1" fill="#8f7052"/><rect x="35" y="68" width="1" height="1" fill="#8f7052"/><rect x="9" y="61" width="1" height="1" fill="#8f7052"/><rect x="82" y="35" width="1" height="1" fill="#5a412b"/><rect x="0" y="97" width="1" height="1" fill="#8f7052"/><rect x="65" y="72" width="1" height="1" fill="#8f7052"/><rect x="86" y="69" width="1" height="1" fill="#5a412b"/><rect x="38" y="25" width="1" height="1" fill="#5a412b"/><rect x="82" y="48" width="1" height="1" fill="#654b34"/><rect x="66" y="77" width="1" height="1" fill="#5a412b"/><rect x="32" y="1" width="1" height="1" fill="#654b34"/><rect x="93" y="87" width="1" height="1" fill="#8f7052"/><rect x="42" y="48" width="1" height="1" fill="#8f7052"/><rect x="88" y="47" width="1" height="1" fill="#8f7052"/><rect x="53" y="78" width="1" height="1" fill="#654b34"/><rect x="53" y="57" width="1" height="1" fill="#8f7052"/><rect x="52" y="28" width="1" height="1" fill="#5a412b"/><rect x="84" y="49" width="1" height="1" fill="#5a412b"/><rect x="67" y="56" width="1" height="1" fill="#654b34"/><rect x="66" y="29" width="1" height="1" fill="#5a412b"/><rect x="68" y="27" width="1" height="1" fill="#5a412b"/><rect x="63" y="15" width="1" height="1" fill="#5a412b"/><rect x="62" y="96" width="1" height="1" fill="#8f7052"/><rect x="73" y="0" width="1" height="1" fill="#654b34"/><rect x="35" y="83" width="1" height="1" fill="#654b34"/><rect x="29" y="60" width="1" height="1" fill="#654b34"/><rect x="18" y="89" width="1" height="1" fill="#8f7052"/><rect x="35" y="40" width="1" height="1" fill="#5a412b"/><rect x="32" y="18" width="1" height="1" fill="#5a412b"/><rect x="96" y="78" width="1" height="1" fill="#8f7052"/><rect x="33" y="84" width="1" height="1" fill="#5a412b"/><rect x="29" y="41" width="1" height="1" fill="#8f7052"/><rect x="46" y="60" width="1" height="1" fill="#5a412b"/><rect x="6" y="24" width="1" height="1" fill="#8f7052"/><rect x="35" y="40" width="1" height="1" fill="#5a412b"/><rect x="17" y="74" width="1" height="1" fill="#654b34"/><rect x="61" y="62" width="1" height="1" fill="#5a412b"/><rect x="93" y="48" width="1" height="1" fill="#8f7052"/><rect x="60" y="82" width="1" height="1" fill="#654b34"/><rect x="30" y="18" width="1" height="1" fill="#5a412b"/><rect x="75" y="69" width="1" height="1" fill="#8f7052"/><rect x="28" y="47" width="1" height="1" fill="#8f7052"/><rect x="18" y="85" width="1" height="1" fill="#5a412b"/><rect x="39" y="78" width="1" height="1" fill="#654b34"/><rect x="35" y="23" width="1" height="1" fill="#5a412b"/><rect x="6" y="1" width="1" height="1" fill="#8f7052"/><rect x="41" y="43" width="1" height="1" fill="#5a412b"/><rect x="28" y="79" width="1" height="1" fill="#5a412b"/><rect x="81" y="40" width="1" height="1" fill="#8f7052"/><rect x="48" y="54" width="1" height="1" fill="#8f7052"/><rect x="16" y="12" width="1" height="1" fill="#8f7052"/><rect x="4" y="71" width="1" height="1" fill="#5a412b"/><rect x="39" y="38" width="1" height="1" fill="#5a412b"/><rect x="56" y="50" width="1" height="1" fill="#8f7052"/><rect x="91" y="46" width="1" height="1" fill="#654b34"/><rect x="70" y="28" width="1" height="1" fill="#654b34"/><rect x="92" y="52" width="1" height="1" fill="#654b34"/><rect x="30" y="77" width="1" height="1" fill="#8f7052"/><rect x="29" y="67" width="1" height="1" fill="#654b34"/><rect x="28" y="73" width="1" height="1" fill="#8f7052"/><rect x="90" y="66" width="1" height="1" fill="#654b34"/><rect x="56" y="39" width="1" height="1" fill="#8f7052"/><rect x="95" y="10" width="1" height="1" fill="#5a412b"/><rect x="74" y="42" width="1" height="1" fill="#5a412b"/><rect x="61" y="44" width="1" height="1" fill="#654b34"/><rect x="71" y="44" width="1" height="1" fill="#5a412b"/><rect x="29" y="77" width="1" height="1" fill="#8f7052"/><rect x="7" y="46" width="1" height="1" fill="#5a412b"/><rect x="60" y="43" width="1" height="1" fill="#5a412b"/><rect x="46" y="16" width="1" height="1" fill="#5a412b"/><rect x="28" y="73" width="1" height="1" fill="#8f7052"/><rect x="30" y="39" width="1" height="1" fill="#5a412b"/><rect x="49" y="47" width="1" height="1" fill="#8f7052"/><rect x="89" y="58" width="1" height="1" fill="#654b34"/><rect x="29" y="69" width="1" height="1" fill="#8f7052"/><rect x="2" y="36" width="1" height="1" fill="#654b34"/><rect x="22" y="72" width="1" height="1" fill="#654b34"/><rect x="10" y="29" width="1" height="1" fill="#8f7052"/><rect x="24" y="30" width="1" height="1" fill="#654b34"/><rect x="0" y="48" width="1" height="1" fill="#5a412b"/><rect x="67" y="97" width="1" height="1" fill="#5a412b"/><rect x="2" y="76" width="1" height="1" fill="#654b34"/><rect x="33" y="27" width="1" height="1" fill="#5a412b"/><rect x="93" y="58" width="1" height="1" fill="#5a412b"/><rect x="1" y="16" width="1" height="1" fill="#654b34"/><rect x="33" y="39" width="1" height="1" fill="#5a412b"/><rect x="48" y="45" width="1" height="1" fill="#5a412b"/><rect x="40" y="84" width="1" height="1" fill="#654b34"/><rect x="71" y="95" width="1" height="1" fill="#8f7052"/><rect x="26" y="25" width="1" height="1" fill="#5a412b"/><rect x="60" y="70" width="1" height="1" fill="#8f7052"/><rect x="52" y="92" width="1" height="1" fill="#8f7052"/><rect x="29" y="8" width="1" height="1" fill="#5a412b"/><rect x="88" y="88" width="1" height="1" fill="#8f7052"/><rect x="3" y="50" width="1" height="1" fill="#5a412b"/><rect x="61" y="45" width="1" height="1" fill="#5a412b"/><rect x="12" y="28" width="1" height="1" fill="#654b34"/><rect x="52" y="15" width="1" height="1" fill="#5a412b"/><rect x="40" y="5" width="1" height="1" fill="#654b34"/><rect x="78" y="80" width="1" height="1" fill="#8f7052"/><rect x="88" y="86" width="1" height="1" fill="#5a412b"/><rect x="29" y="1" width="1" height="1" fill="#654b34"/><rect x="10" y="33" width="1" height="1" fill="#654b34"/><rect x="62" y="41" width="1" height="1" fill="#8f7052"/><rect x="78" y="83" width="1" height="1" fill="#8f7052"/><rect x="65" y="54" width="1" height="1" fill="#8f7052"/><rect x="38" y="45" width="1" height="1" fill="#5a412b"/><rect x="24" y="12" width="1" height="1" fill="#8f7052"/><rect x="72" y="17" width="1" height="1" fill="#654b34"/><rect x="59" y="59" width="1" height="1" fill="#8f7052"/><rect x="95" y="53" width="1" height="1" fill="#654b34"/><rect x="10" y="38" width="1" height="1" fill="#654b34"/></pattern></defs><rect x="0" y="0" width="49" height="49" fill="url(#lt)"/><rect x="0" y="0" width="49" height="49" fill="url(#ltn)" opacity="0.6"/><rect x="49" y="0" width="49" height="49" fill="url(#dk)"/><rect x="49" y="0" width="49" height="49" fill="url(#dkn)" opacity="0.6"/><rect x="98" y="0" width="49" height="49" fill="url(#lt)"/><rect x="98" y="0" width="49" height="49" fill="url(#ltn)" opacity="0.6"/><rect x="147" y="0" width="49" height="49" fill="url(#dk)"/><rect x="147" y="0" width="49" height="49" fill="url(#dkn)" opacity="0.6"/><rect x="196" y="0" width="49" height="49" fill="url(#lt)"/><rect x="196" y="0" width="49" height="49" fill="url(#ltn)" opacity="0.6"/><rect x="245" y="0" width="49" height="49" fill="url(#dk)"/><rect x="245" y="0" width="49" height="49" fill="url(#dkn)" opacity="0.6"/><rect x="294" y="0" width="49" height="49" fill="url(#lt)"/><rect x="294" y="0" width="49" height="49" fill="url(#ltn)" opacity="0.6"/><rect x="343" y="0" width="49" height="49" fill="url(#dk)"/><rect x="343" y="0" width="49" height="49" fill="url(#dkn)" opacity="0.6"/><rect x="0" y="49" width="49" height="49" fill="url(#dk)"/><rect x="0" y="49" width="49" height="49" fill="url(#dkn)" opacity="0.6"/><rect x="49" y="49" width="49" height="49" fill="url(#lt)"/><rect x="49" y="49" width="49" height="49" fill="url(#ltn)" opacity="0.6"/><rect x="98" y="49" width="49" height="49" fill="url(#dk)"/><rect x="98" y="49" width="49" height="49" fill="url(#dkn)" opacity="0.6"/><rect x="147" y="49" width="49" height="49" fill="url(#lt)"/><rect x="147" y="49" width="49" height="49" fill="url(#ltn)" opacity="0.6"/><rect x="196" y="49" width="49" height="49" fill="url(#dk)"/><rect x="196" y="49" width="49" height="49" fill="url(#dkn)" opacity="0.6"/><rect x="245" y="49" width="49" height="49" fill="url(#lt)"/><rect x="245" y="49" width="49" height="49" fill="url(#ltn)" opacity="0.6"/><rect x="294" y="49" width="49" height="49" fill="url(#dk)"/><rect x="294" y="49" width="49" height="49" fill="url(#dkn)" opacity="0.6"/><rect x="343" y="49" width="49" height="49" fill="url(#lt)"/><rect x="343" y="49" width="49" height="49" fill="url(#ltn)" opacity="0.6"/><rect x="0" y="98" width="49" height="49" fill="url(#lt)"/><rect x="0" y="98" width="49" height="49" fill="url(#ltn)" opacity="0.6"/><rect x="49" y="98" width="49" height="49" fill="url(#dk)"/><rect x="49" y="98" width="49" height="49" fill="url(#dkn)" opacity="0.6"/><rect x="98" y="98" width="49" height="49" fill="url(#lt)"/><rect x="98" y="98" width="49" height="49" fill="url(#ltn)" opacity="0.6"/><rect x="147" y="98" width="49" height="49" fill="url(#dk)"/><rect x="147" y="98" width="49" height="49" fill="url(#dkn)" opacity="0.6"/><rect x="196" y="98" width="49" height="49" fill="url(#lt)"/><rect x="196" y="98" width="49" height="49" fill="url(#ltn)" opacity="0.6"/><rect x="245" y="98" width="49" height="49" fill="url(#dk)"/><rect x="245" y="98" width="49" height="49" fill="url(#dkn)" opacity="0.6"/><rect x="294" y="98" width="49" height="49" fill="url(#lt)"/><rect x="294" y="98" width="49" height="49" fill="url(#ltn)" opacity="0.6"/><rect x="343" y="98" width="49" height="49" fill="url(#dk)"/><rect x="343" y="98" width="49" height="49" fill="url(#dkn)" opacity="0.6"/><rect x="0" y="147" width="49" height="49" fill="url(#dk)"/><rect x="0" y="147" width="49" height="49" fill="url(#dkn)" opacity="0.6"/><rect x="49" y="147" width="49" height="49" fill="url(#lt)"/><rect x="49" y="147" width="49" height="49" fill="url(#ltn)" opacity="0.6"/><rect x="98" y="147" width="49" height="49" fill="url(#dk)"/><rect x="98" y="147" width="49" height="49" fill="url(#dkn)" opacity="0.6"/><rect x="147" y="147" width="49" height="49" fill="url(#lt)"/><rect x="147" y="147" width="49" height="49" fill="url(#ltn)" opacity="0.6"/><rect x="196" y="147" width="49" height="49" fill="url(#dk)"/><rect x="196" y="147" width="49" height="49" fill="url(#dkn)" opacity="0.6"/><rect x="245" y="147" width="49" height="49" fill="url(#lt)"/><rect x="245" y="147" width="49" height="49" fill="url(#ltn)" opacity="0.6"/><rect x="294" y="147" width="49" height="49" fill="url(#dk)"/><rect x="294" y="147" width="49" height="49" fill="url(#dkn)" opacity="0.6"/><rect x="343" y="147" width="49" height="49" fill="url(#lt)"/><rect x="343" y="147" width="49" height="49" fill="url(#ltn)" opacity="0.6"/><rect x="0" y="196" width="49" height="49" fill="url(#lt)"/><rect x="0" y="196" width="49" height="49" fill="url(#ltn)" opacity="0.6"/><rect x="49" y="196" width="49" height="49" fill="url(#dk)"/><rect x="49" y="196" width="49" height="49" fill="url(#dkn)" opacity="0.6"/><rect x="98" y="196" width="49" height="49" fill="url(#lt)"/><rect x="98" y="196" width="49" height="49" fill="url(#ltn)" opacity="0.6"/><rect x="147" y="196" width="49" height="49" fill="url(#dk)"/><rect x="147" y="196" width="49" height="49" fill="url(#dkn)" opacity="0.6"/><rect x="196" y="196" width="49" height="49" fill="url(#lt)"/><rect x="196" y="196" width="49" height="49" fill="url(#ltn)" opacity="0.6"/><rect x="245" y="196" width="49" height="49" fill="url(#dk)"/><rect x="245" y="196" width="49" height="49" fill="url(#dkn)" opacity="0.6"/><rect x="294" y="196" width="49" height="49" fill="url(#lt)"/><rect x="294" y="196" width="49" height="49" fill="url(#ltn)" opacity="0.6"/><rect x="343" y="196" width="49" height="49" fill="url(#dk)"/><rect x="343" y="196" width="49" height="49" fill="url(#dkn)" opacity="0.6"/><rect x="0" y="245" width="49" height="49" fill="url(#dk)"/><rect x="0" y="245" width="49" height="49" fill="url(#dkn)" opacity="0.6"/><rect x="49" y="245" width="49" height="49" fill="url(#lt)"/><rect x="49" y="245" width="49" height="49" fill="url(#ltn)" opacity="0.6"/><rect x="98" y="245" width="49" height="49" fill="url(#dk)"/><rect x="98" y="245" width="49" height="49" fill="url(#dkn)" opacity="0.6"/><rect x="147" y="245" width="49" height="49" fill="url(#lt)"/><rect x="147" y="245" width="49" height="49" fill="url(#ltn)" opacity="0.6"/><rect x="196" y="245" width="49" height="49" fill="url(#dk)"/><rect x="196" y="245" width="49" height="49" fill="url(#dkn)" opacity="0.6"/><rect x="245" y="245" width="49" height="49" fill="url(#lt)"/><rect x="245" y="245" width="49" height="49" fill="url(#ltn)" opacity="0.6"/><rect x="294" y="245" width="49" height="49" fill="url(#dk)"/><rect x="294" y="245" width="49" height="49" fill="url(#dkn)" opacity="0.6"/><rect x="343" y="245" width="49" height="49" fill="url(#lt)"/><rect x="343" y="245" width="49" height="49" fill="url(#ltn)" opacity="0.6"/><rect x="0" y="294" width="49" height="49" fill="url(#lt)"/><rect x="0" y="294" width="49" height="49" fill="url(#ltn)" opacity="0.6"/><rect x="49" y="294" width="49" height="49" fill="url(#dk)"/><rect x="49" y="294" width="49" height="49" fill="url(#dkn)" opacity="0.6"/><rect x="98" y="294" width="49" height="49" fill="url(#lt)"/><rect x="98" y="294" width="49" height="49" fill="url(#ltn)" opacity="0.6"/><rect x="147" y="294" width="49" height="49" fill="url(#dk)"/><rect x="147" y="294" width="49" height="49" fill="url(#dkn)" opacity="0.6"/><rect x="196" y="294" width="49" height="49" fill="url(#lt)"/><rect x="196" y="294" width="49" height="49" fill="url(#ltn)" opacity="0.6"/><rect x="245" y="294" width="49" height="49" fill="url(#dk)"/><rect x="245" y="294" width="49" height="49" fill="url(#dkn)" opacity="0.6"/><rect x="294" y="294" width="49" height="49" fill="url(#lt)"/><rect x="294" y="294" width="49" height="49" fill="url(#ltn)" opacity="0.6"/><rect x="343" y="294" width="49" height="49" fill="url(#dk)"/><rect x="343" y="294" width="49" height="49" fill="url(#dkn)" opacity="0.6"/><rect x="0" y="343" width="49" height="49" fill="url(#dk)"/><rect x="0" y="343" width="49" height="49" fill="url(#dkn)" opacity="0.6"/><rect x="49" y="343" width="49" height="49" fill="url(#lt)"/><rect x="49" y="343" width="49" height="49" fill="url(#ltn)" opacity="0.6"/><rect x="98" y="343" width="49" height="49" fill="url(#dk)"/><rect x="98" y="343" width="49" height="49" fill="url(#dkn)" opacity="0.6"/><rect x="147" y="343" width="49" height="49" fill="url(#lt)"/><rect x="147" y="343" width="49" height="49" fill="url(#ltn)" opacity="0.6"/><rect x="196" y="343" width="49" height="49" fill="url(#dk)"/><rect x="196" y="343" width="49" height="49" fill="url(#dkn)" opacity="0.6"/><rect x="245" y="343" width="49" height="49" fill="url(#lt)"/><rect x="245" y="343" width="49" height="49" fill="url(#ltn)" opacity="0.6"/><rect x="294" y="343" width="49" height="49" fill="url(#dk)"/><rect x="294" y="343" width="49" height="49" fill="url(#dkn)" opacity="0.6"/><rect x="343" y="343" width="49" height="49" fill="url(#lt)"/><rect x="343" y="343" width="49" height="49" fill="url(#ltn)" opacity="0.6"/><g transform="translate(0,-0.5) translate(24,25) scale(0.95) translate(-24,-25)"><g fill="#fff" stroke="#fff" stroke-width="2.6" stroke-linejoin="round"><path d="M12.5,10 H18 V12 H21 V10 H27 V12 H30 V10 H35.5 V17 L31,20 V31 C31,34 37,37 37,41.5 H10.5 C10.5,37 17,34 17,31 V20 L12.5,17 Z"/></g><g fill="url(#bgr)" stroke="#000" stroke-width="1.2" stroke-linejoin="round"><path d="M12.5,10 H18 V12 H21 V10 H27 V12 H30 V10 H35.5 V17 L31,20 V31 C31,34 37,37 37,41.5 H10.5 C10.5,37 17,34 17,31 V20 L12.5,17 Z"/></g><path d="M28,21 V31 C29,34 33,37 34,40" stroke="#505064" stroke-width="1" fill="none"/></g><g transform="translate(0,48.5) translate(24,25) scale(0.95) translate(-24,-25)"><g fill="#fff" stroke="#fff" stroke-width="2.6" stroke-linejoin="round"><path d="M20.5,26.5 C18.5,31 11.5,34.5 11.5,41 H36.5 C36.5,34.5 29.5,31 27.5,26.5 Z"/><path d="M18.5,24.5 H29.5 V27 H18.5 Z"/><circle cx="24" cy="18.5" r="7"/></g><g fill="url(#bgr)" stroke="#000" stroke-width="1.2" stroke-linejoin="round"><path d="M20.5,26.5 C18.5,31 11.5,34.5 11.5,41 H36.5 C36.5,34.5 29.5,31 27.5,26.5 Z"/><path d="M18.5,24.5 H29.5 V27 H18.5 Z"/><circle cx="24" cy="18.5" r="7"/></g><path d="M27,13 C29,15 29,18 28,21" stroke="#505060" stroke-width="1" fill="none"/><path d="M31,32 C34,35 35,38 34,40" stroke="#505060" stroke-width="1" fill="none"/></g><g transform="translate(0,293.5) translate(24,25) scale(0.95) translate(-24,-25)"><g fill="#fff" stroke="#fff" stroke-width="2.6" stroke-linejoin="round"><path d="M20.5,26.5 C18.5,31 11.5,34.5 11.5,41 H36.5 C36.5,34.5 29.5,31 27.5,26.5 Z"/><path d="M18.5,24.5 H29.5 V27 H18.5 Z"/><circle cx="24" cy="18.5" r="7"/></g><g fill="url(#wg)" stroke="#000" stroke-width="1.2" stroke-linejoin="round"><path d="M20.5,26.5 C18.5,31 11.5,34.5 11.5,41 H36.5 C36.5,34.5 29.5,31 27.5,26.5 Z"/><path d="M18.5,24.5 H29.5 V27 H18.5 Z"/><circle cx="24" cy="18.5" r="7"/></g><path d="M18,27.5 H30" stroke="#444" stroke-width="0.8"/></g><g transform="translate(0,342.5) translate(24,25) scale(0.95) translate(-24,-25)"><g fill="#fff" stroke="#fff" stroke-width="2.6" stroke-linejoin="round"><path d="M12.5,10 H18 V12 H21 V10 H27 V12 H30 V10 H35.5 V17 L31,20 V31 C31,34 37,37 37,41.5 H10.5 C10.5,37 17,34 17,31 V20 L12.5,17 Z"/></g><g fill="url(#wg)" stroke="#000" stroke-width="1.2" stroke-linejoin="round"><path d="M12.5,10 H18 V12 H21 V10 H27 V12 H30 V10 H35.5 V17 L31,20 V31 C31,34 37,37 37,41.5 H10.5 C10.5,37 17,34 17,31 V20 L12.5,17 Z"/></g><path d="M12.5,17 H35.5 M17,31 H31" stroke="#444" stroke-width="0.8"/></g><g transform="translate(49,-0.5) translate(24,25) scale(0.95) translate(-24,-25)"><g fill="#fff" stroke="#fff" stroke-width="2.6" stroke-linejoin="round"><path d="M19.5,7 L21,9.5 L22.5,6 C25,8 27,9 28,10 C32,12.5 35.5,16 36.5,20 C37.5,25 37.5,32 38,41.5 H12 V37.5 C12.5,33 17,29.5 21,26.5 C18,27 14,27.5 12.5,26.5 C11,25.5 9,24 9,22.5 C11,20 15,16 17,13.5 C18,11.5 19,9 19.5,7 Z"/></g><g fill="url(#bgr)" stroke="#000" stroke-width="1.2" stroke-linejoin="round"><path d="M19.5,7 L21,9.5 L22.5,6 C25,8 27,9 28,10 C32,12.5 35.5,16 36.5,20 C37.5,25 37.5,32 38,41.5 H12 V37.5 C12.5,33 17,29.5 21,26.5 C18,27 14,27.5 12.5,26.5 C11,25.5 9,24 9,22.5 C11,20 15,16 17,13.5 C18,11.5 19,9 19.5,7 Z"/></g><path d="M18,14 C22,15 26,18 25,22 M30,20 C33,26 33,33 30,39" stroke="#505064" stroke-width="1" fill="none"/></g><g transform="translate(49,48.5) translate(24,25) scale(0.95) translate(-24,-25)"><g fill="#fff" stroke="#fff" stroke-width="2.6" stroke-linejoin="round"><path d="M20.5,26.5 C18.5,31 11.5,34.5 11.5,41 H36.5 C36.5,34.5 29.5,31 27.5,26.5 Z"/><path d="M18.5,24.5 H29.5 V27 H18.5 Z"/><circle cx="24" cy="18.5" r="7"/></g><g fill="url(#bgr)" stroke="#000" stroke-width="1.2" stroke-linejoin="round"><path d="M20.5,26.5 C18.5,31 11.5,34.5 11.5,41 H36.5 C36.5,34.5 29.5,31 27.5,26.5 Z"/><path d="M18.5,24.5 H29.5 V27 H18.5 Z"/><circle cx="24" cy="18.5" r="7"/></g><path d="M27,13 C29,15 29,18 28,21" stroke="#505060" stroke-width="1" fill="none"/><path d="M31,32 C34,35 35,38 34,40" stroke="#505060" stroke-width="1" fill="none"/></g><g transform="translate(49,293.5) translate(24,25) scale(0.95) translate(-24,-25)"><g fill="#fff" stroke="#fff" stroke-width="2.6" stroke-linejoin="round"><path d="M20.5,26.5 C18.5,31 11.5,34.5 11.5,41 H36.5 C36.5,34.5 29.5,31 27.5,26.5 Z"/><path d="M18.5,24.5 H29.5 V27 H18.5 Z"/><circle cx="24" cy="18.5" r="7"/></g><g fill="url(#wg)" stroke="#000" stroke-width="1.2" stroke-linejoin="round"><path d="M20.5,26.5 C18.5,31 11.5,34.5 11.5,41 H36.5 C36.5,34.5 29.5,31 27.5,26.5 Z"/><path d="M18.5,24.5 H29.5 V27 H18.5 Z"/><circle cx="24" cy="18.5" r="7"/></g><path d="M18,27.5 H30" stroke="#444" stroke-width="0.8"/></g><g transform="translate(49,342.5) translate(24,25) scale(0.95) translate(-24,-25)"><g fill="#fff" stroke="#fff" stroke-width="2.6" stroke-linejoin="round"><path d="M19.5,7 L21,9.5 L22.5,6 C25,8 27,9 28,10 C32,12.5 35.5,16 36.5,20 C37.5,25 37.5,32 38,41.5 H12 V37.5 C12.5,33 17,29.5 21,26.5 C18,27 14,27.5 12.5,26.5 C11,25.5 9,24 9,22.5 C11,20 15,16 17,13.5 C18,11.5 19,9 19.5,7 Z"/></g><g fill="url(#wg)" stroke="#000" stroke-width="1.2" stroke-linejoin="round"><path d="M19.5,7 L21,9.5 L22.5,6 C25,8 27,9 28,10 C32,12.5 35.5,16 36.5,20 C37.5,25 37.5,32 38,41.5 H12 V37.5 C12.5,33 17,29.5 21,26.5 C18,27 14,27.5 12.5,26.5 C11,25.5 9,24 9,22.5 C11,20 15,16 17,13.5 C18,11.5 19,9 19.5,7 Z"/></g><path d="M16,19 L19,18.5 M12,38 H38" stroke="#333" stroke-width="0.9"/><path d="M30,14 C35,20 35,30 34,38" stroke="#999" stroke-width="1.2" fill="none"/></g><g transform="translate(98,-0.5) translate(24,25) scale(0.95) translate(-24,-25)"><g fill="#fff" stroke="#fff" stroke-width="2.6" stroke-linejoin="round"><circle cx="24" cy="10" r="2.4"/><path d="M24,12 C21,15 13.5,21 13.5,26 C13.5,29.5 16,31.5 18,33 H30 C32,31.5 34.5,29.5 34.5,26 C34.5,21 27,15 24,12 Z"/><path d="M18.5,32.5 H29.5 V36 H18.5 Z"/><path d="M24,36 C21.5,38.5 16,39 9.5,38.8 L9.5,41.2 C15,41.5 21,41 24,39.5 C27,41 33,41.5 38.5,41.2 L38.5,38.8 C32,39 26.5,38.5 24,36 Z"/></g><g fill="url(#bgr)" stroke="#000" stroke-width="1.2" stroke-linejoin="round"><circle cx="24" cy="10" r="2.4"/><path d="M24,12 C21,15 13.5,21 13.5,26 C13.5,29.5 16,31.5 18,33 H30 C32,31.5 34.5,29.5 34.5,26 C34.5,21 27,15 24,12 Z"/><path d="M18.5,32.5 H29.5 V36 H18.5 Z"/><path d="M24,36 C21.5,38.5 16,39 9.5,38.8 L9.5,41.2 C15,41.5 21,41 24,39.5 C27,41 33,41.5 38.5,41.2 L38.5,38.8 C32,39 26.5,38.5 24,36 Z"/></g><path d="M24,19 V31 M19.5,25 H28.5" stroke="#4a4a4a" stroke-width="1" fill="none"/><path d="M16,22 C15,26 17,30 19,31 M32,22 C33,26 31,30 29,31" stroke="#505064" stroke-width="1.2" fill="none"/></g><g transform="translate(98,48.5) translate(24,25) scale(0.95) translate(-24,-25)"><g fill="#fff" stroke="#fff" stroke-width="2.6" stroke-linejoin="round"><path d="M20.5,26.5 C18.5,31 11.5,34.5 11.5,41 H36.5 C36.5,34.5 29.5,31 27.5,26.5 Z"/><path d="M18.5,24.5 H29.5 V27 H18.5 Z"/><circle cx="24" cy="18.5" r="7"/></g><g fill="url(#bgr)" stroke="#000" stroke-width="1.2" stroke-linejoin="round"><path d="M20.5,26.5 C18.5,31 11.5,34.5 11.5,41 H36.5 C36.5,34.5 29.5,31 27.5,26.5 Z"/><path d="M18.5,24.5 H29.5 V27 H18.5 Z"/><circle cx="24" cy="18.5" r="7"/></g><path d="M27,13 C29,15 29,18 28,21" stroke="#505060" stroke-width="1" fill="none"/><path d="M31,32 C34,35 35,38 34,40" stroke="#505060" stroke-width="1" fill="none"/></g><g transform="translate(98,293.5) translate(24,25) scale(0.95) translate(-24,-25)"><g fill="#fff" stroke="#fff" stroke-width="2.6" stroke-linejoin="round"><path d="M20.5,26.5 C18.5,31 11.5,34.5 11.5,41 H36.5 C36.5,34.5 29.5,31 27.5,26.5 Z"/><path d="M18.5,24.5 H29.5 V27 H18.5 Z"/><circle cx="24" cy="18.5" r="7"/></g><g fill="url(#wg)" stroke="#000" stroke-width="1.2" stroke-linejoin="round"><path d="M20.5,26.5 C18.5,31 11.5,34.5 11.5,41 H36.5 C36.5,34.5 29.5,31 27.5,26.5 Z"/><path d="M18.5,24.5 H29.5 V27 H18.5 Z"/><circle cx="24" cy="18.5" r="7"/></g><path d="M18,27.5 H30" stroke="#444" stroke-width="0.8"/></g><g transform="translate(98,342.5) translate(24,25) scale(0.95) translate(-24,-25)"><g fill="#fff" stroke="#fff" stroke-width="2.6" stroke-linejoin="round"><circle cx="24" cy="10" r="2.4"/><path d="M24,12 C21,15 13.5,21 13.5,26 C13.5,29.5 16,31.5 18,33 H30 C32,31.5 34.5,29.5 34.5,26 C34.5,21 27,15 24,12 Z"/><path d="M18.5,32.5 H29.5 V36 H18.5 Z"/><path d="M24,36 C21.5,38.5 16,39 9.5,38.8 L9.5,41.2 C15,41.5 21,41 24,39.5 C27,41 33,41.5 38.5,41.2 L38.5,38.8 C32,39 26.5,38.5 24,36 Z"/></g><g fill="url(#wg)" stroke="#000" stroke-width="1.2" stroke-linejoin="round"><circle cx="24" cy="10" r="2.4"/><path d="M24,12 C21,15 13.5,21 13.5,26 C13.5,29.5 16,31.5 18,33 H30 C32,31.5 34.5,29.5 34.5,26 C34.5,21 27,15 24,12 Z"/><path d="M18.5,32.5 H29.5 V36 H18.5 Z"/><path d="M24,36 C21.5,38.5 16,39 9.5,38.8 L9.5,41.2 C15,41.5 21,41 24,39.5 C27,41 33,41.5 38.5,41.2 L38.5,38.8 C32,39 26.5,38.5 24,36 Z"/></g><path d="M24,19 V31 M19.5,25 H28.5" stroke="#333" stroke-width="1" fill="none"/></g><g transform="translate(147,-0.5) translate(24,25) scale(0.95) translate(-24,-25)"><g fill="#fff" stroke="#fff" stroke-width="2.6" stroke-linejoin="round"><circle cx="8.5" cy="18.5" r="2.6"/><circle cx="15.5" cy="12.5" r="2.6"/><circle cx="24.5" cy="9.5" r="2.6"/><circle cx="33.5" cy="12.5" r="2.6"/><circle cx="40" cy="18.5" r="2.6"/><path d="M8.5,18.5 L16,31 L19.5,29.5 Z"/><path d="M15.5,12.5 L19,30 L22.5,29.5 Z"/><path d="M24.5,9.5 L22.8,30 H26.2 Z"/><path d="M33.5,12.5 L26.5,29.5 L30,30 Z"/><path d="M40,18.5 L29.5,29.5 L33,31 Z"/><path d="M16.5,29.5 H32.5 L31.5,33 H17.5 Z"/><path d="M17.5,32.5 C17.5,35.5 12.5,38 12.5,42 H36.5 C36.5,38 31.5,35.5 31.5,32.5 Z"/></g><g fill="url(#bgr)" stroke="#000" stroke-width="1.2" stroke-linejoin="round"><circle cx="8.5" cy="18.5" r="2.6"/><circle cx="15.5" cy="12.5" r="2.6"/><circle cx="24.5" cy="9.5" r="2.6"/><circle cx="33.5" cy="12.5" r="2.6"/><circle cx="40" cy="18.5" r="2.6"/><path d="M8.5,18.5 L16,31 L19.5,29.5 Z"/><path d="M15.5,12.5 L19,30 L22.5,29.5 Z"/><path d="M24.5,9.5 L22.8,30 H26.2 Z"/><path d="M33.5,12.5 L26.5,29.5 L30,30 Z"/><path d="M40,18.5 L29.5,29.5 L33,31 Z"/><path d="M16.5,29.5 H32.5 L31.5,33 H17.5 Z"/><path d="M17.5,32.5 C17.5,35.5 12.5,38 12.5,42 H36.5 C36.5,38 31.5,35.5 31.5,32.5 Z"/></g><path d="M17,38 C21,36 27,36 32,38" stroke="#505064" stroke-width="1" fill="none"/></g><g transform="translate(147,48.5) translate(24,25) scale(0.95) translate(-24,-25)"><g fill="#fff" stroke="#fff" stroke-width="2.6" stroke-linejoin="round"><path d="M20.5,26.5 C18.5,31 11.5,34.5 11.5,41 H36.5 C36.5,34.5 29.5,31 27.5,26.5 Z"/><path d="M18.5,24.5 H29.5 V27 H18.5 Z"/><circle cx="24" cy="18.5" r="7"/></g><g fill="url(#bgr)" stroke="#000" stroke-width="1.2" stroke-linejoin="round"><path d="M20.5,26.5 C18.5,31 11.5,34.5 11.5,41 H36.5 C36.5,34.5 29.5,31 27.5,26.5 Z"/><path d="M18.5,24.5 H29.5 V27 H18.5 Z"/><circle cx="24" cy="18.5" r="7"/></g><path d="M27,13 C29,15 29,18 28,21" stroke="#505060" stroke-width="1" fill="none"/><path d="M31,32 C34,35 35,38 34,40" stroke="#505060" stroke-width="1" fill="none"/></g><g transform="translate(147,293.5) translate(24,25) scale(0.95) translate(-24,-25)"><g fill="#fff" stroke="#fff" stroke-width="2.6" stroke-linejoin="round"><path d="M20.5,26.5 C18.5,31 11.5,34.5 11.5,41 H36.5 C36.5,34.5 29.5,31 27.5,26.5 Z"/><path d="M18.5,24.5 H29.5 V27 H18.5 Z"/><circle cx="24" cy="18.5" r="7"/></g><g fill="url(#wg)" stroke="#000" stroke-width="1.2" stroke-linejoin="round"><path d="M20.5,26.5 C18.5,31 11.5,34.5 11.5,41 H36.5 C36.5,34.5 29.5,31 27.5,26.5 Z"/><path d="M18.5,24.5 H29.5 V27 H18.5 Z"/><circle cx="24" cy="18.5" r="7"/></g><path d="M18,27.5 H30" stroke="#444" stroke-width="0.8"/></g><g transform="translate(147,342.5) translate(24,25) scale(0.95) translate(-24,-25)"><g fill="#fff" stroke="#fff" stroke-width="2.6" stroke-linejoin="round"><circle cx="8.5" cy="18.5" r="2.6"/><circle cx="15.5" cy="12.5" r="2.6"/><circle cx="24.5" cy="9.5" r="2.6"/><circle cx="33.5" cy="12.5" r="2.6"/><circle cx="40" cy="18.5" r="2.6"/><path d="M8.5,18.5 L16,31 L19.5,29.5 Z"/><path d="M15.5,12.5 L19,30 L22.5,29.5 Z"/><path d="M24.5,9.5 L22.8,30 H26.2 Z"/><path d="M33.5,12.5 L26.5,29.5 L30,30 Z"/><path d="M40,18.5 L29.5,29.5 L33,31 Z"/><path d="M16.5,29.5 H32.5 L31.5,33 H17.5 Z"/><path d="M17.5,32.5 C17.5,35.5 12.5,38 12.5,42 H36.5 C36.5,38 31.5,35.5 31.5,32.5 Z"/></g><g fill="url(#wg)" stroke="#000" stroke-width="1.2" stroke-linejoin="round"><circle cx="8.5" cy="18.5" r="2.6"/><circle cx="15.5" cy="12.5" r="2.6"/><circle cx="24.5" cy="9.5" r="2.6"/><circle cx="33.5" cy="12.5" r="2.6"/><circle cx="40" cy="18.5" r="2.6"/><path d="M8.5,18.5 L16,31 L19.5,29.5 Z"/><path d="M15.5,12.5 L19,30 L22.5,29.5 Z"/><path d="M24.5,9.5 L22.8,30 H26.2 Z"/><path d="M33.5,12.5 L26.5,29.5 L30,30 Z"/><path d="M40,18.5 L29.5,29.5 L33,31 Z"/><path d="M16.5,29.5 H32.5 L31.5,33 H17.5 Z"/><path d="M17.5,32.5 C17.5,35.5 12.5,38 12.5,42 H36.5 C36.5,38 31.5,35.5 31.5,32.5 Z"/></g><path d="M17,32.5 H32" stroke="#444" stroke-width="0.8"/></g><g transform="translate(196,-0.5) translate(24,25) scale(0.95) translate(-24,-25)"><g fill="#fff" stroke="#fff" stroke-width="2.6" stroke-linejoin="round"><path d="M23,8 h2 v2 h2.5 v2 h-2.5 v3.5 h-2 v-3.5 h-2.5 v-2 h2.5 z"/><path d="M24,15 C26.5,15.5 27,18 27,19 C29,17.5 31,17 33,17 C37.5,17 40,20.5 40,24.5 C40,28.5 36,32 31,34 C32,37 36,39 36.5,42 H11.5 C12,39 16,37 17,34 C12,32 8,28.5 8,24.5 C8,20.5 10.5,17 15,17 C17,17 19,17.5 21,19 C21,18 21.5,15.5 24,15 Z"/></g><g fill="url(#bgr)" stroke="#000" stroke-width="1.2" stroke-linejoin="round"><path d="M23,8 h2 v2 h2.5 v2 h-2.5 v3.5 h-2 v-3.5 h-2.5 v-2 h2.5 z"/><path d="M24,15 C26.5,15.5 27,18 27,19 C29,17.5 31,17 33,17 C37.5,17 40,20.5 40,24.5 C40,28.5 36,32 31,34 C32,37 36,39 36.5,42 H11.5 C12,39 16,37 17,34 C12,32 8,28.5 8,24.5 C8,20.5 10.5,17 15,17 C17,17 19,17.5 21,19 C21,18 21.5,15.5 24,15 Z"/></g><ellipse cx="16" cy="25.5" rx="5" ry="5.5" transform="rotate(-30 16 25.5)" fill="#000" stroke="#707078" stroke-width="1.5"/><ellipse cx="32" cy="25.5" rx="5" ry="5.5" transform="rotate(30 32 25.5)" fill="#000" stroke="#707078" stroke-width="1.5"/><path d="M18,38 C21,36 27,36 30,38" stroke="#505064" stroke-width="1" fill="none"/></g><g transform="translate(196,48.5) translate(24,25) scale(0.95) translate(-24,-25)"><g fill="#fff" stroke="#fff" stroke-width="2.6" stroke-linejoin="round"><path d="M20.5,26.5 C18.5,31 11.5,34.5 11.5,41 H36.5 C36.5,34.5 29.5,31 27.5,26.5 Z"/><path d="M18.5,24.5 H29.5 V27 H18.5 Z"/><circle cx="24" cy="18.5" r="7"/></g><g fill="url(#bgr)" stroke="#000" stroke-width="1.2" stroke-linejoin="round"><path d="M20.5,26.5 C18.5,31 11.5,34.5 11.5,41 H36.5 C36.5,34.5 29.5,31 27.5,26.5 Z"/><path d="M18.5,24.5 H29.5 V27 H18.5 Z"/><circle cx="24" cy="18.5" r="7"/></g><path d="M27,13 C29,15 29,18 28,21" stroke="#505060" stroke-width="1" fill="none"/><path d="M31,32 C34,35 35,38 34,40" stroke="#505060" stroke-width="1" fill="none"/></g><g transform="translate(196,342.5) translate(24,25) scale(0.95) translate(-24,-25)"><g fill="#fff" stroke="#fff" stroke-width="2.6" stroke-linejoin="round"><path d="M23,8 h2 v2 h2.5 v2 h-2.5 v3.5 h-2 v-3.5 h-2.5 v-2 h2.5 z"/><path d="M24,15 C26.5,15.5 27,18 27,19 C29,17.5 31,17 33,17 C37.5,17 40,20.5 40,24.5 C40,28.5 36,32 31,34 C32,37 36,39 36.5,42 H11.5 C12,39 16,37 17,34 C12,32 8,28.5 8,24.5 C8,20.5 10.5,17 15,17 C17,17 19,17.5 21,19 C21,18 21.5,15.5 24,15 Z"/></g><g fill="url(#wg)" stroke="#000" stroke-width="1.2" stroke-linejoin="round"><path d="M23,8 h2 v2 h2.5 v2 h-2.5 v3.5 h-2 v-3.5 h-2.5 v-2 h2.5 z"/><path d="M24,15 C26.5,15.5 27,18 27,19 C29,17.5 31,17 33,17 C37.5,17 40,20.5 40,24.5 C40,28.5 36,32 31,34 C32,37 36,39 36.5,42 H11.5 C12,39 16,37 17,34 C12,32 8,28.5 8,24.5 C8,20.5 10.5,17 15,17 C17,17 19,17.5 21,19 C21,18 21.5,15.5 24,15 Z"/></g><ellipse cx="16" cy="25.5" rx="5" ry="5.5" transform="rotate(-30 16 25.5)" fill="#fff" stroke="#555" stroke-width="0.9"/><ellipse cx="32" cy="25.5" rx="5" ry="5.5" transform="rotate(30 32 25.5)" fill="#fff" stroke="#555" stroke-width="0.9"/><ellipse cx="24" cy="20" rx="2.2" ry="3.6" fill="#eee" stroke="#000" stroke-width="1"/><path d="M24,23.5 V33 M17,34 H31" stroke="#000" stroke-width="1.2"/></g><g transform="translate(245,-0.5) translate(24,25) scale(0.95) translate(-24,-25)"><g fill="#fff" stroke="#fff" stroke-width="2.6" stroke-linejoin="round"><circle cx="24" cy="10" r="2.4"/><path d="M24,12 C21,15 13.5,21 13.5,26 C13.5,29.5 16,31.5 18,33 H30 C32,31.5 34.5,29.5 34.5,26 C34.5,21 27,15 24,12 Z"/><path d="M18.5,32.5 H29.5 V36 H18.5 Z"/><path d="M24,36 C21.5,38.5 16,39 9.5,38.8 L9.5,41.2 C15,41.5 21,41 24,39.5 C27,41 33,41.5 38.5,41.2 L38.5,38.8 C32,39 26.5,38.5 24,36 Z"/></g><g fill="url(#bgr)" stroke="#000" stroke-width="1.2" stroke-linejoin="round"><circle cx="24" cy="10" r="2.4"/><path d="M24,12 C21,15 13.5,21 13.5,26 C13.5,29.5 16,31.5 18,33 H30 C32,31.5 34.5,29.5 34.5,26 C34.5,21 27,15 24,12 Z"/><path d="M18.5,32.5 H29.5 V36 H18.5 Z"/><path d="M24,36 C21.5,38.5 16,39 9.5,38.8 L9.5,41.2 C15,41.5 21,41 24,39.5 C27,41 33,41.5 38.5,41.2 L38.5,38.8 C32,39 26.5,38.5 24,36 Z"/></g><path d="M24,19 V31 M19.5,25 H28.5" stroke="#4a4a4a" stroke-width="1" fill="none"/><path d="M16,22 C15,26 17,30 19,31 M32,22 C33,26 31,30 29,31" stroke="#505064" stroke-width="1.2" fill="none"/></g><g transform="translate(245,48.5) translate(24,25) scale(0.95) translate(-24,-25)"><g fill="#fff" stroke="#fff" stroke-width="2.6" stroke-linejoin="round"><path d="M20.5,26.5 C18.5,31 11.5,34.5 11.5,41 H36.5 C36.5,34.5 29.5,31 27.5,26.5 Z"/><path d="M18.5,24.5 H29.5 V27 H18.5 Z"/><circle cx="24" cy="18.5" r="7"/></g><g fill="url(#bgr)" stroke="#000" stroke-width="1.2" stroke-linejoin="round"><path d="M20.5,26.5 C18.5,31 11.5,34.5 11.5,41 H36.5 C36.5,34.5 29.5,31 27.5,26.5 Z"/><path d="M18.5,24.5 H29.5 V27 H18.5 Z"/><circle cx="24" cy="18.5" r="7"/></g><path d="M27,13 C29,15 29,18 28,21" stroke="#505060" stroke-width="1" fill="none"/><path d="M31,32 C34,35 35,38 34,40" stroke="#505060" stroke-width="1" fill="none"/></g><g transform="translate(245,293.5) translate(24,25) scale(0.95) translate(-24,-25)"><g fill="#fff" stroke="#fff" stroke-width="2.6" stroke-linejoin="round"><path d="M20.5,26.5 C18.5,31 11.5,34.5 11.5,41 H36.5 C36.5,34.5 29.5,31 27.5,26.5 Z"/><path d="M18.5,24.5 H29.5 V27 H18.5 Z"/><circle cx="24" cy="18.5" r="7"/></g><g fill="url(#wg)" stroke="#000" stroke-width="1.2" stroke-linejoin="round"><path d="M20.5,26.5 C18.5,31 11.5,34.5 11.5,41 H36.5 C36.5,34.5 29.5,31 27.5,26.5 Z"/><path d="M18.5,24.5 H29.5 V27 H18.5 Z"/><circle cx="24" cy="18.5" r="7"/></g><path d="M18,27.5 H30" stroke="#444" stroke-width="0.8"/></g><g transform="translate(245,342.5) translate(24,25) scale(0.95) translate(-24,-25)"><g fill="#fff" stroke="#fff" stroke-width="2.6" stroke-linejoin="round"><circle cx="24" cy="10" r="2.4"/><path d="M24,12 C21,15 13.5,21 13.5,26 C13.5,29.5 16,31.5 18,33 H30 C32,31.5 34.5,29.5 34.5,26 C34.5,21 27,15 24,12 Z"/><path d="M18.5,32.5 H29.5 V36 H18.5 Z"/><path d="M24,36 C21.5,38.5 16,39 9.5,38.8 L9.5,41.2 C15,41.5 21,41 24,39.5 C27,41 33,41.5 38.5,41.2 L38.5,38.8 C32,39 26.5,38.5 24,36 Z"/></g><g fill="url(#wg)" stroke="#000" stroke-width="1.2" stroke-linejoin="round"><circle cx="24" cy="10" r="2.4"/><path d="M24,12 C21,15 13.5,21 13.5,26 C13.5,29.5 16,31.5 18,33 H30 C32,31.5 34.5,29.5 34.5,26 C34.5,21 27,15 24,12 Z"/><path d="M18.5,32.5 H29.5 V36 H18.5 Z"/><path d="M24,36 C21.5,38.5 16,39 9.5,38.8 L9.5,41.2 C15,41.5 21,41 24,39.5 C27,41 33,41.5 38.5,41.2 L38.5,38.8 C32,39 26.5,38.5 24,36 Z"/></g><path d="M24,19 V31 M19.5,25 H28.5" stroke="#333" stroke-width="1" fill="none"/></g><g transform="translate(294,-0.5) translate(24,25) scale(0.95) translate(-24,-25)"><g fill="#fff" stroke="#fff" stroke-width="2.6" stroke-linejoin="round"><path d="M19.5,7 L21,9.5 L22.5,6 C25,8 27,9 28,10 C32,12.5 35.5,16 36.5,20 C37.5,25 37.5,32 38,41.5 H12 V37.5 C12.5,33 17,29.5 21,26.5 C18,27 14,27.5 12.5,26.5 C11,25.5 9,24 9,22.5 C11,20 15,16 17,13.5 C18,11.5 19,9 19.5,7 Z"/></g><g fill="url(#bgr)" stroke="#000" stroke-width="1.2" stroke-linejoin="round"><path d="M19.5,7 L21,9.5 L22.5,6 C25,8 27,9 28,10 C32,12.5 35.5,16 36.5,20 C37.5,25 37.5,32 38,41.5 H12 V37.5 C12.5,33 17,29.5 21,26.5 C18,27 14,27.5 12.5,26.5 C11,25.5 9,24 9,22.5 C11,20 15,16 17,13.5 C18,11.5 19,9 19.5,7 Z"/></g><path d="M18,14 C22,15 26,18 25,22 M30,20 C33,26 33,33 30,39" stroke="#505064" stroke-width="1" fill="none"/></g><g transform="translate(294,48.5) translate(24,25) scale(0.95) translate(-24,-25)"><g fill="#fff" stroke="#fff" stroke-width="2.6" stroke-linejoin="round"><path d="M20.5,26.5 C18.5,31 11.5,34.5 11.5,41 H36.5 C36.5,34.5 29.5,31 27.5,26.5 Z"/><path d="M18.5,24.5 H29.5 V27 H18.5 Z"/><circle cx="24" cy="18.5" r="7"/></g><g fill="url(#bgr)" stroke="#000" stroke-width="1.2" stroke-linejoin="round"><path d="M20.5,26.5 C18.5,31 11.5,34.5 11.5,41 H36.5 C36.5,34.5 29.5,31 27.5,26.5 Z"/><path d="M18.5,24.5 H29.5 V27 H18.5 Z"/><circle cx="24" cy="18.5" r="7"/></g><path d="M27,13 C29,15 29,18 28,21" stroke="#505060" stroke-width="1" fill="none"/><path d="M31,32 C34,35 35,38 34,40" stroke="#505060" stroke-width="1" fill="none"/></g><g transform="translate(294,293.5) translate(24,25) scale(0.95) translate(-24,-25)"><g fill="#fff" stroke="#fff" stroke-width="2.6" stroke-linejoin="round"><path d="M20.5,26.5 C18.5,31 11.5,34.5 11.5,41 H36.5 C36.5,34.5 29.5,31 27.5,26.5 Z"/><path d="M18.5,24.5 H29.5 V27 H18.5 Z"/><circle cx="24" cy="18.5" r="7"/></g><g fill="url(#wg)" stroke="#000" stroke-width="1.2" stroke-linejoin="round"><path d="M20.5,26.5 C18.5,31 11.5,34.5 11.5,41 H36.5 C36.5,34.5 29.5,31 27.5,26.5 Z"/><path d="M18.5,24.5 H29.5 V27 H18.5 Z"/><circle cx="24" cy="18.5" r="7"/></g><path d="M18,27.5 H30" stroke="#444" stroke-width="0.8"/></g><g transform="translate(294,342.5) translate(24,25) scale(0.95) translate(-24,-25)"><g fill="#fff" stroke="#fff" stroke-width="2.6" stroke-linejoin="round"><path d="M19.5,7 L21,9.5 L22.5,6 C25,8 27,9 28,10 C32,12.5 35.5,16 36.5,20 C37.5,25 37.5,32 38,41.5 H12 V37.5 C12.5,33 17,29.5 21,26.5 C18,27 14,27.5 12.5,26.5 C11,25.5 9,24 9,22.5 C11,20 15,16 17,13.5 C18,11.5 19,9 19.5,7 Z"/></g><g fill="url(#wg)" stroke="#000" stroke-width="1.2" stroke-linejoin="round"><path d="M19.5,7 L21,9.5 L22.5,6 C25,8 27,9 28,10 C32,12.5 35.5,16 36.5,20 C37.5,25 37.5,32 38,41.5 H12 V37.5 C12.5,33 17,29.5 21,26.5 C18,27 14,27.5 12.5,26.5 C11,25.5 9,24 9,22.5 C11,20 15,16 17,13.5 C18,11.5 19,9 19.5,7 Z"/></g><path d="M16,19 L19,18.5 M12,38 H38" stroke="#333" stroke-width="0.9"/><path d="M30,14 C35,20 35,30 34,38" stroke="#999" stroke-width="1.2" fill="none"/></g><g transform="translate(343,-0.5) translate(24,25) scale(0.95) translate(-24,-25)"><g fill="#fff" stroke="#fff" stroke-width="2.6" stroke-linejoin="round"><path d="M12.5,10 H18 V12 H21 V10 H27 V12 H30 V10 H35.5 V17 L31,20 V31 C31,34 37,37 37,41.5 H10.5 C10.5,37 17,34 17,31 V20 L12.5,17 Z"/></g><g fill="url(#bgr)" stroke="#000" stroke-width="1.2" stroke-linejoin="round"><path d="M12.5,10 H18 V12 H21 V10 H27 V12 H30 V10 H35.5 V17 L31,20 V31 C31,34 37,37 37,41.5 H10.5 C10.5,37 17,34 17,31 V20 L12.5,17 Z"/></g><path d="M28,21 V31 C29,34 33,37 34,40" stroke="#505064" stroke-width="1" fill="none"/></g><g transform="translate(343,48.5) translate(24,25) scale(0.95) translate(-24,-25)"><g fill="#fff" stroke="#fff" stroke-width="2.6" stroke-linejoin="round"><path d="M20.5,26.5 C18.5,31 11.5,34.5 11.5,41 H36.5 C36.5,34.5 29.5,31 27.5,26.5 Z"/><path d="M18.5,24.5 H29.5 V27 H18.5 Z"/><circle cx="24" cy="18.5" r="7"/></g><g fill="url(#bgr)" stroke="#000" stroke-width="1.2" stroke-linejoin="round"><path d="M20.5,26.5 C18.5,31 11.5,34.5 11.5,41 H36.5 C36.5,34.5 29.5,31 27.5,26.5 Z"/><path d="M18.5,24.5 H29.5 V27 H18.5 Z"/><circle cx="24" cy="18.5" r="7"/></g><path d="M27,13 C29,15 29,18 28,21" stroke="#505060" stroke-width="1" fill="none"/><path d="M31,32 C34,35 35,38 34,40" stroke="#505060" stroke-width="1" fill="none"/></g><g transform="translate(343,293.5) translate(24,25) scale(0.95) translate(-24,-25)"><g fill="#fff" stroke="#fff" stroke-width="2.6" stroke-linejoin="round"><path d="M20.5,26.5 C18.5,31 11.5,34.5 11.5,41 H36.5 C36.5,34.5 29.5,31 27.5,26.5 Z"/><path d="M18.5,24.5 H29.5 V27 H18.5 Z"/><circle cx="24" cy="18.5" r="7"/></g><g fill="url(#wg)" stroke="#000" stroke-width="1.2" stroke-linejoin="round"><path d="M20.5,26.5 C18.5,31 11.5,34.5 11.5,41 H36.5 C36.5,34.5 29.5,31 27.5,26.5 Z"/><path d="M18.5,24.5 H29.5 V27 H18.5 Z"/><circle cx="24" cy="18.5" r="7"/></g><path d="M18,27.5 H30" stroke="#444" stroke-width="0.8"/></g><g transform="translate(343,342.5) translate(24,25) scale(0.95) translate(-24,-25)"><g fill="#fff" stroke="#fff" stroke-width="2.6" stroke-linejoin="round"><path d="M12.5,10 H18 V12 H21 V10 H27 V12 H30 V10 H35.5 V17 L31,20 V31 C31,34 37,37 37,41.5 H10.5 C10.5,37 17,34 17,31 V20 L12.5,17 Z"/></g><g fill="url(#wg)" stroke="#000" stroke-width="1.2" stroke-linejoin="round"><path d="M12.5,10 H18 V12 H21 V10 H27 V12 H30 V10 H35.5 V17 L31,20 V31 C31,34 37,37 37,41.5 H10.5 C10.5,37 17,34 17,31 V20 L12.5,17 Z"/></g><path d="M12.5,17 H35.5 M17,31 H31" stroke="#444" stroke-width="0.8"/></g><g transform="translate(196,195.5) translate(24,25) scale(0.95) translate(-24,-25)"><g fill="#fff" stroke="#fff" stroke-width="2.6" stroke-linejoin="round"><path d="M20.5,26.5 C18.5,31 11.5,34.5 11.5,41 H36.5 C36.5,34.5 29.5,31 27.5,26.5 Z"/><path d="M18.5,24.5 H29.5 V27 H18.5 Z"/><circle cx="24" cy="18.5" r="7"/></g><g fill="url(#wg)" stroke="#000" stroke-width="1.2" stroke-linejoin="round"><path d="M20.5,26.5 C18.5,31 11.5,34.5 11.5,41 H36.5 C36.5,34.5 29.5,31 27.5,26.5 Z"/><path d="M18.5,24.5 H29.5 V27 H18.5 Z"/><circle cx="24" cy="18.5" r="7"/></g><path d="M18,27.5 H30" stroke="#444" stroke-width="0.8"/></g></svg></body></html>
